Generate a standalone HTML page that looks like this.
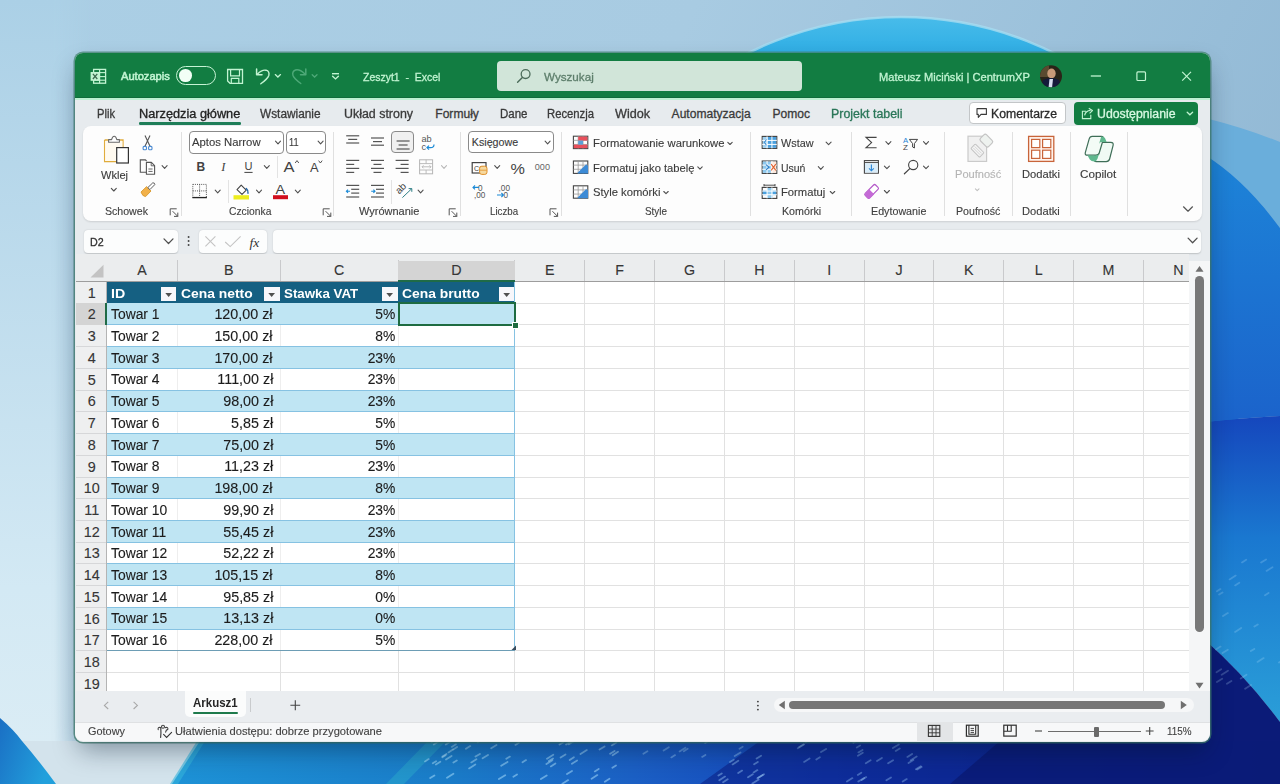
<!DOCTYPE html>
<html><head><meta charset="utf-8"><style>
html,body{margin:0;padding:0;width:1280px;height:784px;overflow:hidden;}
body{position:relative;font-family:"Liberation Sans", sans-serif;}
.t{position:absolute;white-space:pre;line-height:normal;-webkit-text-stroke:0.3px currentColor;}
.a{position:absolute;}
svg{position:absolute;overflow:visible;}
</style></head><body>

<svg width="1280" height="784" style="left:0;top:0">
<defs>
<linearGradient id="bgsky" x1="0" y1="0" x2="1" y2="0.3">
<stop offset="0" stop-color="#abcfe5"/><stop offset="0.5" stop-color="#a8cbe2"/><stop offset="1" stop-color="#92b9d5"/></linearGradient>
<linearGradient id="bgleft" x1="0" y1="0" x2="0" y2="1">
<stop offset="0" stop-color="#abd0e6"/><stop offset="0.75" stop-color="#d3e9f4"/><stop offset="1" stop-color="#dcedf5"/></linearGradient>
<linearGradient id="petaltop" x1="0" y1="0" x2="0" y2="1">
<stop offset="0" stop-color="#48bcea"/><stop offset="0.06" stop-color="#2cacE4"/><stop offset="0.12" stop-color="#1f9edd"/><stop offset="1" stop-color="#1d80d3"/></linearGradient>
<linearGradient id="rmid" x1="0" y1="0" x2="0" y2="1">
<stop offset="0" stop-color="#1d84d8"/><stop offset="1" stop-color="#1b63cb"/></linearGradient>
<linearGradient id="rcyan" x1="0" y1="0" x2="0" y2="1">
<stop offset="0" stop-color="#1547bd"/><stop offset="0.4" stop-color="#1a78d0"/><stop offset="1" stop-color="#2a9ed8"/></linearGradient>
<linearGradient id="bbottom" x1="0" y1="0" x2="1" y2="0">
<stop offset="0" stop-color="#1d92d6"/><stop offset="0.25" stop-color="#1a7cc8"/><stop offset="0.42" stop-color="#1b5fc4"/><stop offset="0.6" stop-color="#1240b8"/><stop offset="0.8" stop-color="#0e2c9c"/><stop offset="1" stop-color="#0b1f86"/></linearGradient>
<linearGradient id="gmask" x1="0" y1="0" x2="1" y2="0"><stop offset="0.6" stop-color="#fff"/><stop offset="1" stop-color="#000"/></linearGradient>
<mask id="mleft"><rect x="0" y="0" width="90" height="784" fill="url(#gmask)"/></mask>
</defs>
<rect x="0" y="0" width="1280" height="784" fill="url(#bgsky)"/>
<rect x="0" y="0" width="90" height="784" fill="url(#bgleft)" mask="url(#mleft)"/>
<circle cx="901" cy="360" r="343" fill="url(#petaltop)" stroke="#a8dcf0" stroke-width="2.5" stroke-opacity="0.8"/>
<path d="M1205 118 Q1245 128 1280 142 L1280 228 Q1245 180 1205 155 Z" fill="#6aaedb"/>
<path d="M1205 155 Q1245 180 1280 228 L1280 416 Q1245 418 1205 422 Z" fill="url(#rmid)"/>
<path d="M1205 422 Q1245 418 1280 416 L1280 722 Q1245 675 1205 640 Z" fill="url(#rcyan)"/>
<path d="M1205 640 Q1245 675 1280 722 L1280 784 L1205 784 Z" fill="#0b1b78"/>
<path d="M195 741 L1280 741 L1280 784 L170 784 Z" fill="url(#bbottom)"/>
<path d="M760 741 L1280 741 L1280 784 L700 784 Z" fill="#0b1d82" opacity="0.55"/>
<path d="M1000 741 L1280 741 L1280 784 L950 784 Z" fill="#0a1a74" opacity="0.8"/>
<path d="M0 741 L200 741 L172 784 L0 784 Z" fill="#d3e3ec"/>
<linearGradient id="blt" x1="0" y1="0" x2="1" y2="0.4"><stop offset="0" stop-color="#1a6fc4"/><stop offset="1" stop-color="#22a0dc"/></linearGradient>
<path d="M0 718 Q14 730 22 741 Q40 762 56 784 L0 784 Z" fill="url(#blt)"/>
<path d="M197 741 L205 741 L178 784 L170 784 Z" fill="#35b4dc" opacity="0.6"/>
<path d="M428 741 L446 741 L404 784 L386 784 Z" fill="#2aa6cc" opacity="0.55"/>
<line x1='491.2' y1='748.3' x2='496.5' y2='745.0' stroke='#b0e4ff' stroke-width='1.8' stroke-linecap='round' opacity='0.50'/><line x1='435.9' y1='764.5' x2='440.3' y2='761.8' stroke='#b0e4ff' stroke-width='1.8' stroke-linecap='round' opacity='0.50'/><line x1='432.8' y1='763.3' x2='436.1' y2='761.2' stroke='#b0e4ff' stroke-width='1.8' stroke-linecap='round' opacity='0.50'/><line x1='515.4' y1='744.9' x2='518.9' y2='742.8' stroke='#b0e4ff' stroke-width='1.8' stroke-linecap='round' opacity='0.50'/><line x1='513.4' y1='776.7' x2='517.0' y2='774.5' stroke='#b0e4ff' stroke-width='1.8' stroke-linecap='round' opacity='0.50'/><line x1='469.1' y1='768.4' x2='475.3' y2='764.5' stroke='#b0e4ff' stroke-width='1.8' stroke-linecap='round' opacity='0.50'/><line x1='547.0' y1='758.7' x2='553.3' y2='754.7' stroke='#b0e4ff' stroke-width='1.8' stroke-linecap='round' opacity='0.50'/><line x1='430.2' y1='778.1' x2='434.4' y2='775.5' stroke='#b0e4ff' stroke-width='1.8' stroke-linecap='round' opacity='0.50'/><line x1='451.7' y1='746.9' x2='455.9' y2='744.3' stroke='#b0e4ff' stroke-width='1.8' stroke-linecap='round' opacity='0.50'/><line x1='599.5' y1='749.6' x2='604.6' y2='746.4' stroke='#b0e4ff' stroke-width='1.8' stroke-linecap='round' opacity='0.50'/><line x1='560.6' y1='757.6' x2='565.5' y2='754.5' stroke='#b0e4ff' stroke-width='1.8' stroke-linecap='round' opacity='0.50'/><line x1='433.8' y1='744.5' x2='437.7' y2='742.1' stroke='#b0e4ff' stroke-width='1.8' stroke-linecap='round' opacity='0.50'/><line x1='569.7' y1='760.0' x2='573.9' y2='757.3' stroke='#b0e4ff' stroke-width='1.8' stroke-linecap='round' opacity='0.50'/><line x1='548.8' y1='761.0' x2='553.0' y2='758.4' stroke='#b0e4ff' stroke-width='1.8' stroke-linecap='round' opacity='0.50'/><line x1='594.8' y1='771.4' x2='598.7' y2='768.9' stroke='#b0e4ff' stroke-width='1.8' stroke-linecap='round' opacity='0.50'/><line x1='546.4' y1='764.1' x2='552.4' y2='760.3' stroke='#b0e4ff' stroke-width='1.8' stroke-linecap='round' opacity='0.50'/><line x1='580.5' y1='754.1' x2='586.8' y2='750.1' stroke='#b0e4ff' stroke-width='1.8' stroke-linecap='round' opacity='0.50'/><line x1='446.0' y1='759.6' x2='451.6' y2='756.0' stroke='#b0e4ff' stroke-width='1.8' stroke-linecap='round' opacity='0.50'/><line x1='453.4' y1='762.5' x2='456.8' y2='760.5' stroke='#b0e4ff' stroke-width='1.8' stroke-linecap='round' opacity='0.50'/><line x1='567.0' y1='774.1' x2='572.0' y2='771.0' stroke='#b0e4ff' stroke-width='1.8' stroke-linecap='round' opacity='0.50'/><line x1='612.6' y1='755.2' x2='618.0' y2='751.8' stroke='#b0e4ff' stroke-width='1.8' stroke-linecap='round' opacity='0.50'/><line x1='550.8' y1='766.4' x2='555.4' y2='763.4' stroke='#b0e4ff' stroke-width='1.8' stroke-linecap='round' opacity='0.50'/><line x1='604.8' y1='781.7' x2='609.5' y2='778.7' stroke='#b0e4ff' stroke-width='1.8' stroke-linecap='round' opacity='0.50'/><line x1='566.1' y1='744.5' x2='571.6' y2='741.1' stroke='#b0e4ff' stroke-width='1.8' stroke-linecap='round' opacity='0.50'/><line x1='562.4' y1='783.7' x2='568.2' y2='780.1' stroke='#b0e4ff' stroke-width='1.8' stroke-linecap='round' opacity='0.50'/><line x1='482.6' y1='758.2' x2='488.0' y2='754.9' stroke='#b0e4ff' stroke-width='1.8' stroke-linecap='round' opacity='0.50'/><line x1='425.0' y1='761.4' x2='428.7' y2='759.1' stroke='#b0e4ff' stroke-width='1.8' stroke-linecap='round' opacity='0.50'/><line x1='445.8' y1='744.5' x2='451.4' y2='740.9' stroke='#b0e4ff' stroke-width='1.8' stroke-linecap='round' opacity='0.50'/><line x1='448.5' y1='752.4' x2='452.9' y2='749.6' stroke='#b0e4ff' stroke-width='1.8' stroke-linecap='round' opacity='0.50'/><line x1='611.7' y1='745.4' x2='616.4' y2='742.5' stroke='#b0e4ff' stroke-width='1.8' stroke-linecap='round' opacity='0.50'/><line x1='540.9' y1='779.1' x2='546.7' y2='775.5' stroke='#b0e4ff' stroke-width='1.8' stroke-linecap='round' opacity='0.50'/><line x1='610.1' y1='753.7' x2='614.6' y2='750.9' stroke='#b0e4ff' stroke-width='1.8' stroke-linecap='round' opacity='0.50'/><line x1='498.9' y1='779.1' x2='505.2' y2='775.2' stroke='#b0e4ff' stroke-width='1.8' stroke-linecap='round' opacity='0.50'/><line x1='453.2' y1='749.4' x2='457.1' y2='746.9' stroke='#b0e4ff' stroke-width='1.8' stroke-linecap='round' opacity='0.50'/><line x1='471.3' y1='762.4' x2='476.4' y2='759.2' stroke='#b0e4ff' stroke-width='1.8' stroke-linecap='round' opacity='0.50'/><line x1='477.8' y1='742.2' x2='482.3' y2='739.3' stroke='#b0e4ff' stroke-width='1.8' stroke-linecap='round' opacity='0.50'/><line x1='501.2' y1='765.8' x2='507.5' y2='761.9' stroke='#b0e4ff' stroke-width='1.8' stroke-linecap='round' opacity='0.50'/><line x1='571.9' y1='763.7' x2='577.1' y2='760.4' stroke='#b0e4ff' stroke-width='1.8' stroke-linecap='round' opacity='0.50'/><line x1='568.8' y1='744.3' x2='574.8' y2='740.5' stroke='#b0e4ff' stroke-width='1.8' stroke-linecap='round' opacity='0.50'/><line x1='591.6' y1='778.7' x2='597.3' y2='775.1' stroke='#b0e4ff' stroke-width='1.8' stroke-linecap='round' opacity='0.50'/><line x1='506.3' y1='758.8' x2='509.9' y2='756.6' stroke='#b0e4ff' stroke-width='1.8' stroke-linecap='round' opacity='0.50'/><line x1='559.5' y1='744.6' x2='563.0' y2='742.5' stroke='#b0e4ff' stroke-width='1.8' stroke-linecap='round' opacity='0.50'/><line x1='465.9' y1='748.8' x2='470.2' y2='746.1' stroke='#b0e4ff' stroke-width='1.8' stroke-linecap='round' opacity='0.50'/><line x1='431.6' y1='742.0' x2='435.3' y2='739.7' stroke='#b0e4ff' stroke-width='1.8' stroke-linecap='round' opacity='0.50'/><line x1='442.3' y1='757.3' x2='445.6' y2='755.2' stroke='#b0e4ff' stroke-width='1.8' stroke-linecap='round' opacity='0.50'/><line x1='612.4' y1='767.8' x2='616.0' y2='765.5' stroke='#b0e4ff' stroke-width='1.8' stroke-linecap='round' opacity='0.50'/><line x1='475.5' y1='756.6' x2='479.9' y2='753.9' stroke='#b0e4ff' stroke-width='1.8' stroke-linecap='round' opacity='0.50'/><line x1='447.0' y1='777.7' x2='453.4' y2='773.7' stroke='#b0e4ff' stroke-width='1.8' stroke-linecap='round' opacity='0.50'/><line x1='522.5' y1='762.3' x2='526.0' y2='760.1' stroke='#b0e4ff' stroke-width='1.8' stroke-linecap='round' opacity='0.50'/><line x1='442.5' y1='756.4' x2='446.5' y2='753.9' stroke='#b0e4ff' stroke-width='1.8' stroke-linecap='round' opacity='0.50'/><line x1='739.5' y1='748.8' x2='742.7' y2='746.7' stroke='#a8d8ff' stroke-width='1.8' stroke-linecap='round' opacity='0.40'/><line x1='754.1' y1='764.2' x2='757.8' y2='761.9' stroke='#a8d8ff' stroke-width='1.8' stroke-linecap='round' opacity='0.40'/><line x1='705.2' y1='743.1' x2='710.1' y2='740.1' stroke='#a8d8ff' stroke-width='1.8' stroke-linecap='round' opacity='0.40'/><line x1='757.4' y1='778.3' x2='762.8' y2='774.9' stroke='#a8d8ff' stroke-width='1.8' stroke-linecap='round' opacity='0.40'/><line x1='671.3' y1='757.4' x2='675.1' y2='755.1' stroke='#a8d8ff' stroke-width='1.8' stroke-linecap='round' opacity='0.40'/><line x1='732.6' y1='764.4' x2='738.3' y2='760.8' stroke='#a8d8ff' stroke-width='1.8' stroke-linecap='round' opacity='0.40'/><line x1='679.6' y1='751.4' x2='685.4' y2='747.7' stroke='#a8d8ff' stroke-width='1.8' stroke-linecap='round' opacity='0.40'/><line x1='758.2' y1='777.8' x2='764.0' y2='774.2' stroke='#a8d8ff' stroke-width='1.8' stroke-linecap='round' opacity='0.40'/><line x1='738.2' y1='773.1' x2='742.1' y2='770.6' stroke='#a8d8ff' stroke-width='1.8' stroke-linecap='round' opacity='0.40'/><line x1='702.1' y1='756.9' x2='705.4' y2='754.9' stroke='#a8d8ff' stroke-width='1.8' stroke-linecap='round' opacity='0.40'/><line x1='643.4' y1='753.7' x2='647.4' y2='751.2' stroke='#a8d8ff' stroke-width='1.8' stroke-linecap='round' opacity='0.40'/><line x1='723.1' y1='782.2' x2='727.7' y2='779.3' stroke='#a8d8ff' stroke-width='1.8' stroke-linecap='round' opacity='0.40'/><line x1='752.4' y1='783.5' x2='758.7' y2='779.6' stroke='#a8d8ff' stroke-width='1.8' stroke-linecap='round' opacity='0.40'/><line x1='683.8' y1='751.3' x2='687.7' y2='748.8' stroke='#a8d8ff' stroke-width='1.8' stroke-linecap='round' opacity='0.40'/><line x1='663.6' y1='750.6' x2='668.8' y2='747.3' stroke='#a8d8ff' stroke-width='1.8' stroke-linecap='round' opacity='0.40'/><line x1='748.0' y1='777.3' x2='752.8' y2='774.3' stroke='#a8d8ff' stroke-width='1.8' stroke-linecap='round' opacity='0.40'/><line x1='718.4' y1='775.6' x2='721.8' y2='773.4' stroke='#a8d8ff' stroke-width='1.8' stroke-linecap='round' opacity='0.40'/><line x1='719.3' y1='780.2' x2='725.0' y2='776.6' stroke='#a8d8ff' stroke-width='1.8' stroke-linecap='round' opacity='0.40'/><line x1='730.0' y1='762.1' x2='733.8' y2='759.7' stroke='#a8d8ff' stroke-width='1.8' stroke-linecap='round' opacity='0.40'/><line x1='734.7' y1='756.0' x2='740.5' y2='752.4' stroke='#a8d8ff' stroke-width='1.8' stroke-linecap='round' opacity='0.40'/><line x1='756.6' y1='758.6' x2='761.1' y2='755.8' stroke='#a8d8ff' stroke-width='1.8' stroke-linecap='round' opacity='0.40'/><line x1='753.6' y1='772.4' x2='757.4' y2='770.1' stroke='#a8d8ff' stroke-width='1.8' stroke-linecap='round' opacity='0.40'/><line x1='797.8' y1='748.3' x2='803.9' y2='744.5' stroke='#a8d8ff' stroke-width='1.8' stroke-linecap='round' opacity='0.35'/><line x1='892.9' y1='748.1' x2='898.8' y2='744.5' stroke='#a8d8ff' stroke-width='1.8' stroke-linecap='round' opacity='0.35'/><line x1='917.2' y1='769.6' x2='921.6' y2='766.9' stroke='#a8d8ff' stroke-width='1.8' stroke-linecap='round' opacity='0.35'/><line x1='856.8' y1='747.5' x2='860.1' y2='745.5' stroke='#a8d8ff' stroke-width='1.8' stroke-linecap='round' opacity='0.35'/><line x1='915.9' y1='769.3' x2='920.8' y2='766.2' stroke='#a8d8ff' stroke-width='1.8' stroke-linecap='round' opacity='0.35'/><line x1='910.7' y1='760.2' x2='916.7' y2='756.5' stroke='#a8d8ff' stroke-width='1.8' stroke-linecap='round' opacity='0.35'/><line x1='895.7' y1='750.9' x2='899.7' y2='748.4' stroke='#a8d8ff' stroke-width='1.8' stroke-linecap='round' opacity='0.35'/><line x1='821.0' y1='752.1' x2='826.1' y2='748.9' stroke='#a8d8ff' stroke-width='1.8' stroke-linecap='round' opacity='0.35'/><line x1='816.3' y1='759.6' x2='819.9' y2='757.3' stroke='#a8d8ff' stroke-width='1.8' stroke-linecap='round' opacity='0.35'/><line x1='907.4' y1='756.9' x2='912.1' y2='753.9' stroke='#a8d8ff' stroke-width='1.8' stroke-linecap='round' opacity='0.35'/><line x1='861.7' y1='780.0' x2='866.2' y2='777.1' stroke='#a8d8ff' stroke-width='1.8' stroke-linecap='round' opacity='0.35'/><line x1='908.5' y1='763.1' x2='913.4' y2='760.0' stroke='#a8d8ff' stroke-width='1.8' stroke-linecap='round' opacity='0.35'/><line x1='853.3' y1='742.8' x2='857.9' y2='739.9' stroke='#a8d8ff' stroke-width='1.8' stroke-linecap='round' opacity='0.35'/><line x1='805.6' y1='742.2' x2='811.4' y2='738.6' stroke='#a8d8ff' stroke-width='1.8' stroke-linecap='round' opacity='0.35'/><line x1='804.1' y1='761.9' x2='809.6' y2='758.4' stroke='#a8d8ff' stroke-width='1.8' stroke-linecap='round' opacity='0.35'/><line x1='857.9' y1='755.7' x2='862.8' y2='752.7' stroke='#a8d8ff' stroke-width='1.8' stroke-linecap='round' opacity='0.35'/><line x1='857.8' y1='774.9' x2='861.3' y2='772.7' stroke='#a8d8ff' stroke-width='1.8' stroke-linecap='round' opacity='0.35'/><line x1='858.4' y1='752.4' x2='862.5' y2='749.9' stroke='#a8d8ff' stroke-width='1.8' stroke-linecap='round' opacity='0.35'/><line x1='888.1' y1='763.3' x2='893.1' y2='760.2' stroke='#a8d8ff' stroke-width='1.8' stroke-linecap='round' opacity='0.35'/><line x1='886.4' y1='780.3' x2='891.0' y2='777.4' stroke='#a8d8ff' stroke-width='1.8' stroke-linecap='round' opacity='0.35'/><line x1='865.8' y1='763.2' x2='870.6' y2='760.2' stroke='#a8d8ff' stroke-width='1.8' stroke-linecap='round' opacity='0.35'/><line x1='877.0' y1='761.0' x2='881.9' y2='757.9' stroke='#a8d8ff' stroke-width='1.8' stroke-linecap='round' opacity='0.35'/><line x1='846.9' y1='781.5' x2='852.4' y2='778.1' stroke='#a8d8ff' stroke-width='1.8' stroke-linecap='round' opacity='0.35'/><line x1='902.7' y1='781.6' x2='906.7' y2='779.1' stroke='#a8d8ff' stroke-width='1.8' stroke-linecap='round' opacity='0.35'/><line x1='858.3' y1='781.6' x2='864.2' y2='777.9' stroke='#a8d8ff' stroke-width='1.8' stroke-linecap='round' opacity='0.35'/><line x1='799.2' y1='747.1' x2='803.8' y2='744.2' stroke='#a8d8ff' stroke-width='1.8' stroke-linecap='round' opacity='0.35'/><line x1='1216.9' y1='591.3' x2='1220.4' y2='589.1' stroke='#bfe6ff' stroke-width='1.8' stroke-linecap='round' opacity='0.22'/><line x1='1257.5' y1='661.9' x2='1263.6' y2='658.1' stroke='#bfe6ff' stroke-width='1.8' stroke-linecap='round' opacity='0.22'/><line x1='1222.5' y1='653.1' x2='1227.8' y2='649.8' stroke='#bfe6ff' stroke-width='1.8' stroke-linecap='round' opacity='0.22'/><line x1='1221.7' y1='674.8' x2='1228.0' y2='670.8' stroke='#bfe6ff' stroke-width='1.8' stroke-linecap='round' opacity='0.22'/><line x1='1226.9' y1='683.8' x2='1231.4' y2='681.0' stroke='#bfe6ff' stroke-width='1.8' stroke-linecap='round' opacity='0.22'/><line x1='1245.1' y1='688.7' x2='1251.0' y2='685.0' stroke='#bfe6ff' stroke-width='1.8' stroke-linecap='round' opacity='0.22'/><line x1='1223.0' y1='616.1' x2='1227.8' y2='613.1' stroke='#bfe6ff' stroke-width='1.8' stroke-linecap='round' opacity='0.22'/><line x1='1235.1' y1='585.4' x2='1239.3' y2='582.8' stroke='#bfe6ff' stroke-width='1.8' stroke-linecap='round' opacity='0.22'/><line x1='1261.1' y1='562.5' x2='1266.1' y2='559.4' stroke='#bfe6ff' stroke-width='1.8' stroke-linecap='round' opacity='0.22'/><line x1='1242.0' y1='562.4' x2='1246.2' y2='559.7' stroke='#bfe6ff' stroke-width='1.8' stroke-linecap='round' opacity='0.22'/><line x1='1254.4' y1='626.6' x2='1257.8' y2='624.5' stroke='#bfe6ff' stroke-width='1.8' stroke-linecap='round' opacity='0.22'/><line x1='1279.0' y1='662.5' x2='1285.3' y2='658.5' stroke='#bfe6ff' stroke-width='1.8' stroke-linecap='round' opacity='0.22'/><line x1='1219.1' y1='594.5' x2='1222.5' y2='592.4' stroke='#bfe6ff' stroke-width='1.8' stroke-linecap='round' opacity='0.22'/><line x1='1265.0' y1='595.2' x2='1268.6' y2='592.9' stroke='#bfe6ff' stroke-width='1.8' stroke-linecap='round' opacity='0.22'/><line x1='1240.7' y1='678.5' x2='1246.5' y2='674.8' stroke='#bfe6ff' stroke-width='1.8' stroke-linecap='round' opacity='0.22'/><line x1='1229.6' y1='579.4' x2='1235.7' y2='575.6' stroke='#bfe6ff' stroke-width='1.8' stroke-linecap='round' opacity='0.22'/><line x1='1250.8' y1='651.1' x2='1254.3' y2='648.9' stroke='#bfe6ff' stroke-width='1.8' stroke-linecap='round' opacity='0.22'/><line x1='1215.9' y1='649.5' x2='1220.5' y2='646.6' stroke='#bfe6ff' stroke-width='1.8' stroke-linecap='round' opacity='0.22'/><line x1='1216.9' y1='682.0' x2='1222.2' y2='678.7' stroke='#bfe6ff' stroke-width='1.8' stroke-linecap='round' opacity='0.22'/><line x1='1266.5' y1='570.9' x2='1272.5' y2='567.2' stroke='#bfe6ff' stroke-width='1.8' stroke-linecap='round' opacity='0.22'/><line x1='1216.5' y1='672.2' x2='1221.2' y2='669.3' stroke='#bfe6ff' stroke-width='1.8' stroke-linecap='round' opacity='0.22'/><line x1='1235.1' y1='631.9' x2='1241.2' y2='628.0' stroke='#bfe6ff' stroke-width='1.8' stroke-linecap='round' opacity='0.22'/>
</svg>
<div class=a style='left:75px;top:53px;width:1134.5px;height:688.5px;background:#e7ebee;border-radius:8px;box-shadow:0 12px 26px -4px rgba(0,20,40,.4),0 0 0 1.5px rgba(70,135,115,.75)'></div>
<div class=a style='left:75px;top:53px;width:1134.5px;height:45.4px;background:#127d42;border-radius:8px 8px 0 0'></div>
<div class=a style='left:75px;top:96.6px;width:1134.5px;height:1.8px;background:#0f6c3a'></div>
<div class=a style='left:75px;top:98.4px;width:1134.5px;height:1.6px;background:#bdf0d2'></div>
<div class=a style='left:139.4px;top:122.4px;width:101.3px;height:2.4px;background:#1f7e58;border-radius:1.2px'></div>
<div class=a style='left:496.5px;top:61px;width:305.5px;height:30.25px;background:#d1e5d9;border-radius:4px'></div>
<div class=a style='left:176px;top:66px;width:40px;height:19px;box-sizing:border-box;border:1.6px solid #c6f3d4;border-radius:10px'></div>
<div class=a style='left:179px;top:69.3px;width:12.6px;height:12.6px;background:#f2fff6;border-radius:50%'></div>
<div class=a style='left:969px;top:102.4px;width:97px;height:21.85px;box-sizing:border-box;background:#fff;border:1px solid #c3c6c8;border-radius:4px'></div>
<div class=a style='left:1074.4px;top:102px;width:123.35px;height:22.5px;background:#127d42;border-radius:4px'></div>
<div class=a style='left:83px;top:126.3px;width:1118.6px;height:95px;background:#fdfdfd;border-radius:8px;box-shadow:0 1px 2px rgba(0,0,0,.12)'></div>
<div class=a style='left:181px;top:132.4px;width:1px;height:84px;background:#e0e0e0'></div>
<div class=a style='left:333px;top:132.4px;width:1px;height:84px;background:#e0e0e0'></div>
<div class=a style='left:460.3px;top:132.4px;width:1px;height:84px;background:#e0e0e0'></div>
<div class=a style='left:561px;top:132.4px;width:1px;height:84px;background:#e0e0e0'></div>
<div class=a style='left:750px;top:132.4px;width:1px;height:84px;background:#e0e0e0'></div>
<div class=a style='left:851.25px;top:132.4px;width:1px;height:84px;background:#e0e0e0'></div>
<div class=a style='left:944.4px;top:132.4px;width:1px;height:84px;background:#e0e0e0'></div>
<div class=a style='left:1011.6px;top:132.4px;width:1px;height:84px;background:#e0e0e0'></div>
<div class=a style='left:1069.7px;top:132.4px;width:1px;height:84px;background:#e0e0e0'></div>
<div class=a style='left:1126.7px;top:132.4px;width:1px;height:84px;background:#e0e0e0'></div>
<div class=a style='left:189px;top:131px;width:94.75px;height:22.6px;box-sizing:border-box;border:1px solid #8a8a8a;border-radius:4px;background:#fff'></div>
<div class=a style='left:286px;top:131px;width:40px;height:22.6px;box-sizing:border-box;border:1px solid #8a8a8a;border-radius:4px;background:#fff'></div>
<div class=a style='left:468.4px;top:131.4px;width:85.6px;height:22px;box-sizing:border-box;border:1px solid #8a8a8a;border-radius:4px;background:#fff'></div>
<div class=a style='left:391px;top:131.4px;width:22.5px;height:22px;box-sizing:border-box;border:1px solid #8a8a8a;border-radius:4px;background:#f0f0f0'></div>
<div class=a style='left:277px;top:156px;width:1px;height:22px;background:#e3e3e3'></div>
<div class=a style='left:228px;top:180px;width:1px;height:23px;background:#e3e3e3'></div>
<div class=a style='left:391.4px;top:180px;width:1px;height:24px;background:#e3e3e3'></div>
<div class=a style='left:84.3px;top:230px;width:93.7px;height:23px;background:#fcfdfd;border-radius:4px;box-shadow:0 0.5px 1.5px rgba(0,0,0,.18)'></div>
<div class=a style='left:198.6px;top:230px;width:68.4px;height:23px;background:#fcfdfd;border-radius:4px;box-shadow:0 0.5px 1.5px rgba(0,0,0,.18)'></div>
<div class=a style='left:272.8px;top:230px;width:928.4px;height:23px;background:#fcfdfd;border-radius:4px;box-shadow:0 0.5px 1.5px rgba(0,0,0,.18)'></div>
<div class=a style='left:76px;top:253.5px;width:1113px;height:28px;background:#ebedee'></div>
<div class=a style='left:76px;top:281.5px;width:31px;height:409.5px;background:#eeeff0'></div>
<div class=a style='left:107px;top:281.5px;width:1082px;height:409.5px;background:#ffffff'></div>
<div class=a style='left:176.5px;top:650.5px;width:1px;height:40.5px;background:#e1e1e1'></div>
<div class=a style='left:176.5px;top:303.2px;width:1px;height:347.3px;background:#eeeeee'></div>
<div class=a style='left:176.5px;top:259.5px;width:1px;height:22px;background:#c9cacc'></div>
<div class=a style='left:279.8px;top:650.5px;width:1px;height:40.5px;background:#e1e1e1'></div>
<div class=a style='left:279.8px;top:303.2px;width:1px;height:347.3px;background:#eeeeee'></div>
<div class=a style='left:279.8px;top:259.5px;width:1px;height:22px;background:#c9cacc'></div>
<div class=a style='left:397.5px;top:650.5px;width:1px;height:40.5px;background:#e1e1e1'></div>
<div class=a style='left:397.5px;top:303.2px;width:1px;height:347.3px;background:#eeeeee'></div>
<div class=a style='left:397.5px;top:259.5px;width:1px;height:22px;background:#c9cacc'></div>
<div class=a style='left:514.3px;top:281.5px;width:1px;height:409.5px;background:#e1e1e1'></div>
<div class=a style='left:514.3px;top:259.5px;width:1px;height:22px;background:#c9cacc'></div>
<div class=a style='left:584.15px;top:281.5px;width:1px;height:409.5px;background:#e1e1e1'></div>
<div class=a style='left:584.15px;top:259.5px;width:1px;height:22px;background:#c9cacc'></div>
<div class=a style='left:654.0px;top:281.5px;width:1px;height:409.5px;background:#e1e1e1'></div>
<div class=a style='left:654.0px;top:259.5px;width:1px;height:22px;background:#c9cacc'></div>
<div class=a style='left:723.8499999999999px;top:281.5px;width:1px;height:409.5px;background:#e1e1e1'></div>
<div class=a style='left:723.8499999999999px;top:259.5px;width:1px;height:22px;background:#c9cacc'></div>
<div class=a style='left:793.6999999999999px;top:281.5px;width:1px;height:409.5px;background:#e1e1e1'></div>
<div class=a style='left:793.6999999999999px;top:259.5px;width:1px;height:22px;background:#c9cacc'></div>
<div class=a style='left:863.55px;top:281.5px;width:1px;height:409.5px;background:#e1e1e1'></div>
<div class=a style='left:863.55px;top:259.5px;width:1px;height:22px;background:#c9cacc'></div>
<div class=a style='left:933.3999999999999px;top:281.5px;width:1px;height:409.5px;background:#e1e1e1'></div>
<div class=a style='left:933.3999999999999px;top:259.5px;width:1px;height:22px;background:#c9cacc'></div>
<div class=a style='left:1003.2499999999999px;top:281.5px;width:1px;height:409.5px;background:#e1e1e1'></div>
<div class=a style='left:1003.2499999999999px;top:259.5px;width:1px;height:22px;background:#c9cacc'></div>
<div class=a style='left:1073.1px;top:281.5px;width:1px;height:409.5px;background:#e1e1e1'></div>
<div class=a style='left:1073.1px;top:259.5px;width:1px;height:22px;background:#c9cacc'></div>
<div class=a style='left:1142.9499999999998px;top:281.5px;width:1px;height:409.5px;background:#e1e1e1'></div>
<div class=a style='left:1142.9499999999998px;top:259.5px;width:1px;height:22px;background:#c9cacc'></div>
<div class=a style='left:107px;top:302.73px;width:1082px;height:1px;background:#e1e1e1'></div>
<div class=a style='left:76px;top:302.73px;width:31px;height:1px;background:#d6d7d9'></div>
<div class=a style='left:107px;top:324.46px;width:1082px;height:1px;background:#e1e1e1'></div>
<div class=a style='left:76px;top:324.46px;width:31px;height:1px;background:#d6d7d9'></div>
<div class=a style='left:107px;top:346.19px;width:1082px;height:1px;background:#e1e1e1'></div>
<div class=a style='left:76px;top:346.19px;width:31px;height:1px;background:#d6d7d9'></div>
<div class=a style='left:107px;top:367.92px;width:1082px;height:1px;background:#e1e1e1'></div>
<div class=a style='left:76px;top:367.92px;width:31px;height:1px;background:#d6d7d9'></div>
<div class=a style='left:107px;top:389.65px;width:1082px;height:1px;background:#e1e1e1'></div>
<div class=a style='left:76px;top:389.65px;width:31px;height:1px;background:#d6d7d9'></div>
<div class=a style='left:107px;top:411.38px;width:1082px;height:1px;background:#e1e1e1'></div>
<div class=a style='left:76px;top:411.38px;width:31px;height:1px;background:#d6d7d9'></div>
<div class=a style='left:107px;top:433.11px;width:1082px;height:1px;background:#e1e1e1'></div>
<div class=a style='left:76px;top:433.11px;width:31px;height:1px;background:#d6d7d9'></div>
<div class=a style='left:107px;top:454.84000000000003px;width:1082px;height:1px;background:#e1e1e1'></div>
<div class=a style='left:76px;top:454.84000000000003px;width:31px;height:1px;background:#d6d7d9'></div>
<div class=a style='left:107px;top:476.57px;width:1082px;height:1px;background:#e1e1e1'></div>
<div class=a style='left:76px;top:476.57px;width:31px;height:1px;background:#d6d7d9'></div>
<div class=a style='left:107px;top:498.3px;width:1082px;height:1px;background:#e1e1e1'></div>
<div class=a style='left:76px;top:498.3px;width:31px;height:1px;background:#d6d7d9'></div>
<div class=a style='left:107px;top:520.03px;width:1082px;height:1px;background:#e1e1e1'></div>
<div class=a style='left:76px;top:520.03px;width:31px;height:1px;background:#d6d7d9'></div>
<div class=a style='left:107px;top:541.76px;width:1082px;height:1px;background:#e1e1e1'></div>
<div class=a style='left:76px;top:541.76px;width:31px;height:1px;background:#d6d7d9'></div>
<div class=a style='left:107px;top:563.49px;width:1082px;height:1px;background:#e1e1e1'></div>
<div class=a style='left:76px;top:563.49px;width:31px;height:1px;background:#d6d7d9'></div>
<div class=a style='left:107px;top:585.22px;width:1082px;height:1px;background:#e1e1e1'></div>
<div class=a style='left:76px;top:585.22px;width:31px;height:1px;background:#d6d7d9'></div>
<div class=a style='left:107px;top:606.95px;width:1082px;height:1px;background:#e1e1e1'></div>
<div class=a style='left:76px;top:606.95px;width:31px;height:1px;background:#d6d7d9'></div>
<div class=a style='left:107px;top:628.6800000000001px;width:1082px;height:1px;background:#e1e1e1'></div>
<div class=a style='left:76px;top:628.6800000000001px;width:31px;height:1px;background:#d6d7d9'></div>
<div class=a style='left:107px;top:650.4100000000001px;width:1082px;height:1px;background:#e1e1e1'></div>
<div class=a style='left:76px;top:650.4100000000001px;width:31px;height:1px;background:#d6d7d9'></div>
<div class=a style='left:107px;top:672.14px;width:1082px;height:1px;background:#e1e1e1'></div>
<div class=a style='left:76px;top:672.14px;width:31px;height:1px;background:#d6d7d9'></div>
<div class=a style='left:107px;top:693.87px;width:1082px;height:1px;background:#e1e1e1'></div>
<div class=a style='left:76px;top:693.87px;width:31px;height:1px;background:#d6d7d9'></div>
<svg width='16' height='16' style='left:89px;top:263px'><path d='M1.5 14.6 L14.5 14.6 L14.5 1.8 Z' fill='#c3c3c3'/></svg>
<div class=a style='left:398px;top:261px;width:116.8px;height:20.5px;background:#d4d4d4'></div>
<div class=a style='left:398px;top:280px;width:116.8px;height:2px;background:#1f6b47'></div>
<div class=a style='left:76px;top:303.23px;width:31px;height:21.73px;background:#d4d4d4'></div>
<div class=a style='left:76px;top:281px;width:322px;height:1px;background:#9d9d9d'></div>
<div class=a style='left:514.8px;top:281px;width:674.2px;height:1px;background:#9d9d9d'></div>
<div class=a style='left:106.3px;top:281.5px;width:1px;height:409.5px;background:#b4b4b4'></div>
<div class=a style='left:105.2px;top:303.23px;width:2px;height:21.73px;background:#1f6b47'></div>
<div class=a style='left:107px;top:281.5px;width:407.8px;height:21.93px;background:#156082'></div>
<div class=a style='left:107px;top:303.23px;width:407.8px;height:21.73px;background:#bfe5f3'></div>
<div class=a style='left:107px;top:346.69px;width:407.8px;height:21.73px;background:#bfe5f3'></div>
<div class=a style='left:107px;top:390.15px;width:407.8px;height:21.73px;background:#bfe5f3'></div>
<div class=a style='left:107px;top:433.61px;width:407.8px;height:21.73px;background:#bfe5f3'></div>
<div class=a style='left:107px;top:477.07px;width:407.8px;height:21.73px;background:#bfe5f3'></div>
<div class=a style='left:107px;top:520.53px;width:407.8px;height:21.73px;background:#bfe5f3'></div>
<div class=a style='left:107px;top:563.99px;width:407.8px;height:21.73px;background:#bfe5f3'></div>
<div class=a style='left:107px;top:607.45px;width:407.8px;height:21.73px;background:#bfe5f3'></div>
<div class=a style='left:107px;top:324.46px;width:407.8px;height:1px;background:#86c2e2'></div>
<div class=a style='left:107px;top:346.19px;width:407.8px;height:1px;background:#86c2e2'></div>
<div class=a style='left:107px;top:367.92px;width:407.8px;height:1px;background:#86c2e2'></div>
<div class=a style='left:107px;top:389.65px;width:407.8px;height:1px;background:#86c2e2'></div>
<div class=a style='left:107px;top:411.38px;width:407.8px;height:1px;background:#86c2e2'></div>
<div class=a style='left:107px;top:433.11px;width:407.8px;height:1px;background:#86c2e2'></div>
<div class=a style='left:107px;top:454.84000000000003px;width:407.8px;height:1px;background:#86c2e2'></div>
<div class=a style='left:107px;top:476.57px;width:407.8px;height:1px;background:#86c2e2'></div>
<div class=a style='left:107px;top:498.3px;width:407.8px;height:1px;background:#86c2e2'></div>
<div class=a style='left:107px;top:520.03px;width:407.8px;height:1px;background:#86c2e2'></div>
<div class=a style='left:107px;top:541.76px;width:407.8px;height:1px;background:#86c2e2'></div>
<div class=a style='left:107px;top:563.49px;width:407.8px;height:1px;background:#86c2e2'></div>
<div class=a style='left:107px;top:585.22px;width:407.8px;height:1px;background:#86c2e2'></div>
<div class=a style='left:107px;top:606.95px;width:407.8px;height:1px;background:#86c2e2'></div>
<div class=a style='left:107px;top:628.6800000000001px;width:407.8px;height:1px;background:#86c2e2'></div>
<div class=a style='left:107px;top:650.4100000000001px;width:407.8px;height:1px;background:#86c2e2'></div>
<div class=a style='left:514.3px;top:281.5px;width:1px;height:369px;background:#86c2e2'></div>
<div class=a style='left:107px;top:650.4100000000001px;width:407.8px;height:1px;background:#6d9db5'></div>
<div class=a style='left:160.8px;top:286.7px;width:15.2px;height:14.8px;background:#f7f7fb'></div>
<svg width='16' height='15' style='left:160.8px;top:286.7px'><path d='M4.3 6 L11 6 L7.65 10 Z' fill='#505050'/></svg>
<div class=a style='left:264.4px;top:286.7px;width:15.2px;height:14.8px;background:#f7f7fb'></div>
<svg width='16' height='15' style='left:264.4px;top:286.7px'><path d='M4.3 6 L11 6 L7.65 10 Z' fill='#505050'/></svg>
<div class=a style='left:382.4px;top:286.7px;width:15.2px;height:14.8px;background:#f7f7fb'></div>
<svg width='16' height='15' style='left:382.4px;top:286.7px'><path d='M4.3 6 L11 6 L7.65 10 Z' fill='#505050'/></svg>
<div class=a style='left:498.6px;top:286.7px;width:15.2px;height:14.8px;background:#f7f7fb'></div>
<svg width='16' height='15' style='left:498.6px;top:286.7px'><path d='M4.3 6 L11 6 L7.65 10 Z' fill='#505050'/></svg>
<div class=a style='left:397.5px;top:302.4px;width:118.5px;height:23.8px;box-sizing:border-box;border:2px solid #1e6b41'></div>
<div class=a style='left:512.6px;top:322.8px;width:5px;height:5px;background:#1e6b41;box-shadow:0 0 0 1px #fff'></div>
<svg width='6' height='6' style='left:510.5px;top:645px'><path d='M5 0.5 L5 5 L0.5 5 Z' fill='#3a4c5c'/></svg>
<div class=a style='left:1189px;top:261px;width:20.5px;height:430px;background:#f5f6f7'></div>
<svg width='10' height='8' style='left:1195px;top:264.5px'><path d='M0.5 6.8 L4.5 1 L8.5 6.8 Z' fill='#707070'/></svg>
<div class=a style='left:1195px;top:276.4px;width:8.5px;height:356px;background:#787878;border-radius:4.5px'></div>
<svg width='10' height='8' style='left:1195px;top:681.8px'><path d='M0.5 0.8 L8.5 0.8 L4.5 6.5 Z' fill='#707070'/></svg>
<div class=a style='left:76px;top:691px;width:1133px;height:30.6px;background:#eaedf0'></div>
<div class=a style='left:184.7px;top:691px;width:61px;height:25.5px;background:#fbfcfc;border-radius:0 0 5px 5px'></div>
<div class=a style='left:193px;top:711.6px;width:44.7px;height:2px;background:#1e7a4c;border-radius:1px'></div>
<div class=a style='left:249.5px;top:698px;width:1px;height:14px;background:#c9cbcd'></div>
<div class=a style='left:774px;top:698px;width:420px;height:14px;background:#f6f7f8;border-radius:7px'></div>
<svg width='8' height='10' style='left:777.6px;top:700px'><path d='M6.8 0.8 L6.8 9.2 L0.8 5 Z' fill='#6f6f6f'/></svg>
<div class=a style='left:789.2px;top:700.9px;width:376.2px;height:8.1px;background:#767676;border-radius:4px'></div>
<svg width='8' height='10' style='left:1179.5px;top:700px'><path d='M0.8 0.8 L0.8 9.2 L6.8 5 Z' fill='#6f6f6f'/></svg>
<div class=a style='left:75px;top:721.6px;width:1134.5px;height:19.9px;background:#f7f8f9;border-radius:0 0 8px 8px;border-top:1px solid #dfe1e3;box-sizing:border-box'></div>
<div class=a style='left:916.8px;top:722.2px;width:36.6px;height:18.5px;background:#e3e5e7'></div>
<div class=a style='left:1047.6px;top:730.8px;width:93.4px;height:1px;background:#6d6d6d'></div>
<div class=a style='left:1093.9px;top:726.5px;width:5.6px;height:10.2px;background:#6a6a6a;border-radius:1px'></div>
<div class=t style='left:121.00px;top:69.12px;font-size:11.80px;color:#c2f4d2;-webkit-text-stroke:0.55px currentColor;transform:scaleX(0.9420);transform-origin:left;'>Autozapis</div>
<div class=t style='left:363.00px;top:70.57px;font-size:11.52px;color:#c2f4d2;transform:scaleX(0.9094);transform-origin:left;'>Zeszyt1  -  Excel</div>
<div class=t style='left:544.00px;top:70.50px;font-size:11.39px;color:#5d7e6b;transform:scaleX(1.0241);transform-origin:left;'>Wyszukaj</div>
<div class=t style='left:879.40px;top:70.62px;font-size:11.25px;color:#c2f4d2;transform:scaleX(0.9858);transform-origin:left;'>Mateusz Miciński | CentrumXP</div>
<div class=t style='left:96.60px;top:106.88px;font-size:12.07px;color:#3a3a3a;transform:scaleX(0.9260);transform-origin:left;'>Plik</div>
<div class=t style='left:260.40px;top:106.88px;font-size:12.07px;color:#3a3a3a;transform:scaleX(0.9824);transform-origin:left;'>Wstawianie</div>
<div class=t style='left:343.80px;top:106.88px;font-size:12.07px;color:#3a3a3a;transform:scaleX(1.0291);transform-origin:left;'>Układ strony</div>
<div class=t style='left:435.30px;top:106.88px;font-size:12.07px;color:#3a3a3a;'>Formuły</div>
<div class=t style='left:499.50px;top:106.88px;font-size:12.07px;color:#3a3a3a;transform:scaleX(0.9534);transform-origin:left;'>Dane</div>
<div class=t style='left:547.00px;top:106.88px;font-size:12.07px;color:#3a3a3a;transform:scaleX(0.9345);transform-origin:left;'>Recenzja</div>
<div class=t style='left:614.70px;top:106.88px;font-size:12.07px;color:#3a3a3a;transform:scaleX(1.0473);transform-origin:left;'>Widok</div>
<div class=t style='left:671.60px;top:106.88px;font-size:12.07px;color:#3a3a3a;'>Automatyzacja</div>
<div class=t style='left:772.50px;top:106.88px;font-size:12.07px;color:#3a3a3a;'>Pomoc</div>
<div class=t style='left:139.40px;top:106.88px;font-size:12.07px;color:#222;transform:scaleX(1.0564);transform-origin:left;'>Narzędzia główne</div>
<div class=t style='left:830.60px;top:106.88px;font-size:12.07px;color:#2a7658;transform:scaleX(1.0268);transform-origin:left;'>Projekt tabeli</div>
<div class=t style='left:991.00px;top:107.08px;font-size:12.07px;color:#2b2b2b;transform:scaleX(1.0147);transform-origin:left;'>Komentarze</div>
<div class=t style='left:1097.00px;top:107.08px;font-size:12.07px;color:#d8f8e2;transform:scaleX(1.0191);transform-origin:left;'>Udostępnianie</div>
<div class=t style='left:192.00px;top:136.07px;font-size:10.70px;color:#3b3b3b;-webkit-text-stroke:0.12px currentColor;transform:scaleX(1.0595);transform-origin:left;'>Aptos Narrow</div>
<div class=t style='left:289.40px;top:136.07px;font-size:10.70px;color:#3b3b3b;-webkit-text-stroke:0.12px currentColor;transform:scaleX(0.8654);transform-origin:left;'>11</div>
<div class=t style='left:471.80px;top:136.32px;font-size:10.70px;color:#3b3b3b;-webkit-text-stroke:0.12px currentColor;'>Księgowe</div>
<div class=t style='left:592.50px;top:137.07px;font-size:10.70px;color:#3b3b3b;-webkit-text-stroke:0.12px currentColor;transform:scaleX(1.0541);transform-origin:left;'>Formatowanie warunkowe</div>
<div class=t style='left:592.50px;top:161.72px;font-size:10.70px;color:#3b3b3b;-webkit-text-stroke:0.12px currentColor;transform:scaleX(1.0481);transform-origin:left;'>Formatuj jako tabelę</div>
<div class=t style='left:592.50px;top:186.32px;font-size:10.70px;color:#3b3b3b;-webkit-text-stroke:0.12px currentColor;transform:scaleX(1.0521);transform-origin:left;'>Style komórki</div>
<div class=t style='left:781.25px;top:137.07px;font-size:10.70px;color:#3b3b3b;-webkit-text-stroke:0.12px currentColor;transform:scaleX(1.0136);transform-origin:left;'>Wstaw</div>
<div class=t style='left:781.25px;top:161.72px;font-size:10.70px;color:#3b3b3b;-webkit-text-stroke:0.12px currentColor;transform:scaleX(0.9778);transform-origin:left;'>Usuń</div>
<div class=t style='left:781.25px;top:186.32px;font-size:10.70px;color:#3b3b3b;-webkit-text-stroke:0.12px currentColor;transform:scaleX(1.0493);transform-origin:left;'>Formatuj</div>
<div class=t style='left:100.60px;top:169.07px;font-size:10.97px;color:#3b3b3b;-webkit-text-stroke:0.12px currentColor;transform:scaleX(1.0070);transform-origin:left;'>Wklej</div>
<div class=t style='left:954.80px;top:168.32px;font-size:10.70px;color:#b4b4b4;-webkit-text-stroke:0.12px currentColor;transform:scaleX(1.0367);transform-origin:left;'>Poufność</div>
<div class=t style='left:1021.60px;top:168.32px;font-size:10.70px;color:#3b3b3b;-webkit-text-stroke:0.12px currentColor;transform:scaleX(1.0455);transform-origin:left;'>Dodatki</div>
<div class=t style='left:1080.30px;top:168.32px;font-size:10.70px;color:#3b3b3b;-webkit-text-stroke:0.12px currentColor;transform:scaleX(1.0907);transform-origin:left;'>Copilot</div>
<div class=t style='left:105.00px;top:206.21px;font-size:10.15px;color:#404040;-webkit-text-stroke:0.12px currentColor;transform:scaleX(1.0448);transform-origin:left;'>Schowek</div>
<div class=t style='left:228.75px;top:206.21px;font-size:10.15px;color:#404040;-webkit-text-stroke:0.12px currentColor;transform:scaleX(1.0187);transform-origin:left;'>Czcionka</div>
<div class=t style='left:359.00px;top:206.21px;font-size:10.15px;color:#404040;-webkit-text-stroke:0.12px currentColor;transform:scaleX(1.0858);transform-origin:left;'>Wyrównanie</div>
<div class=t style='left:489.80px;top:206.21px;font-size:10.15px;color:#404040;-webkit-text-stroke:0.12px currentColor;transform:scaleX(0.9615);transform-origin:left;'>Liczba</div>
<div class=t style='left:645.00px;top:206.21px;font-size:10.15px;color:#404040;-webkit-text-stroke:0.12px currentColor;transform:scaleX(0.9757);transform-origin:left;'>Style</div>
<div class=t style='left:782.00px;top:206.21px;font-size:10.15px;color:#404040;-webkit-text-stroke:0.12px currentColor;transform:scaleX(1.0550);transform-origin:left;'>Komórki</div>
<div class=t style='left:870.80px;top:206.21px;font-size:10.15px;color:#404040;-webkit-text-stroke:0.12px currentColor;transform:scaleX(1.0574);transform-origin:left;'>Edytowanie</div>
<div class=t style='left:955.60px;top:206.21px;font-size:10.15px;color:#404040;-webkit-text-stroke:0.12px currentColor;transform:scaleX(1.0501);transform-origin:left;'>Poufność</div>
<div class=t style='left:1021.60px;top:206.21px;font-size:10.15px;color:#404040;-webkit-text-stroke:0.12px currentColor;transform:scaleX(1.1020);transform-origin:left;'>Dodatki</div>
<div class=t style='left:90.30px;top:235.70px;font-size:11.39px;color:#303030;transform:scaleX(0.9418);transform-origin:left;'>D2</div>
<div class=t style='left:137.24px;top:262.29px;font-size:14.27px;color:#363636;-webkit-text-stroke:0.12px currentColor;'>A</div>
<div class=t style='left:223.89px;top:262.29px;font-size:14.27px;color:#363636;-webkit-text-stroke:0.12px currentColor;'>B</div>
<div class=t style='left:334.00px;top:262.29px;font-size:14.27px;color:#363636;-webkit-text-stroke:0.12px currentColor;'>C</div>
<div class=t style='left:451.25px;top:262.29px;font-size:14.27px;color:#363636;-webkit-text-stroke:0.12px currentColor;'>D</div>
<div class=t style='left:544.97px;top:262.29px;font-size:14.27px;color:#363636;-webkit-text-stroke:0.12px currentColor;'>E</div>
<div class=t style='left:615.22px;top:262.29px;font-size:14.27px;color:#363636;-webkit-text-stroke:0.12px currentColor;'>F</div>
<div class=t style='left:683.88px;top:262.29px;font-size:14.27px;color:#363636;-webkit-text-stroke:0.12px currentColor;'>G</div>
<div class=t style='left:754.13px;top:262.29px;font-size:14.27px;color:#363636;-webkit-text-stroke:0.12px currentColor;'>H</div>
<div class=t style='left:827.14px;top:262.29px;font-size:14.27px;color:#363636;-webkit-text-stroke:0.12px currentColor;'>I</div>
<div class=t style='left:895.41px;top:262.29px;font-size:14.27px;color:#363636;-webkit-text-stroke:0.12px currentColor;'>J</div>
<div class=t style='left:964.07px;top:262.29px;font-size:14.27px;color:#363636;-webkit-text-stroke:0.12px currentColor;'>K</div>
<div class=t style='left:1034.71px;top:262.29px;font-size:14.27px;color:#363636;-webkit-text-stroke:0.12px currentColor;'>L</div>
<div class=t style='left:1102.59px;top:262.29px;font-size:14.27px;color:#363636;-webkit-text-stroke:0.12px currentColor;'>M</div>
<div class=t style='left:1173.23px;top:262.29px;font-size:14.27px;color:#363636;-webkit-text-stroke:0.12px currentColor;'>N</div>
<div class=t style='left:87.79px;top:284.67px;font-size:14.40px;color:#363636;-webkit-text-stroke:0.12px currentColor;'>1</div>
<div class=t style='left:87.79px;top:306.40px;font-size:14.40px;color:#363636;-webkit-text-stroke:0.12px currentColor;'>2</div>
<div class=t style='left:87.79px;top:328.13px;font-size:14.40px;color:#363636;-webkit-text-stroke:0.12px currentColor;'>3</div>
<div class=t style='left:87.79px;top:349.86px;font-size:14.40px;color:#363636;-webkit-text-stroke:0.12px currentColor;'>4</div>
<div class=t style='left:87.79px;top:371.59px;font-size:14.40px;color:#363636;-webkit-text-stroke:0.12px currentColor;'>5</div>
<div class=t style='left:87.79px;top:393.32px;font-size:14.40px;color:#363636;-webkit-text-stroke:0.12px currentColor;'>6</div>
<div class=t style='left:87.79px;top:415.05px;font-size:14.40px;color:#363636;-webkit-text-stroke:0.12px currentColor;'>7</div>
<div class=t style='left:87.79px;top:436.78px;font-size:14.40px;color:#363636;-webkit-text-stroke:0.12px currentColor;'>8</div>
<div class=t style='left:87.79px;top:458.51px;font-size:14.40px;color:#363636;-webkit-text-stroke:0.12px currentColor;'>9</div>
<div class=t style='left:83.79px;top:480.24px;font-size:14.40px;color:#363636;-webkit-text-stroke:0.12px currentColor;'>10</div>
<div class=t style='left:84.32px;top:501.97px;font-size:14.40px;color:#363636;-webkit-text-stroke:0.12px currentColor;'>11</div>
<div class=t style='left:83.79px;top:523.70px;font-size:14.40px;color:#363636;-webkit-text-stroke:0.12px currentColor;'>12</div>
<div class=t style='left:83.79px;top:545.43px;font-size:14.40px;color:#363636;-webkit-text-stroke:0.12px currentColor;'>13</div>
<div class=t style='left:83.79px;top:567.16px;font-size:14.40px;color:#363636;-webkit-text-stroke:0.12px currentColor;'>14</div>
<div class=t style='left:83.79px;top:588.89px;font-size:14.40px;color:#363636;-webkit-text-stroke:0.12px currentColor;'>15</div>
<div class=t style='left:83.79px;top:610.62px;font-size:14.40px;color:#363636;-webkit-text-stroke:0.12px currentColor;'>16</div>
<div class=t style='left:83.79px;top:632.35px;font-size:14.40px;color:#363636;-webkit-text-stroke:0.12px currentColor;'>17</div>
<div class=t style='left:83.79px;top:654.08px;font-size:14.40px;color:#363636;-webkit-text-stroke:0.12px currentColor;'>18</div>
<div class=t style='left:83.79px;top:675.81px;font-size:14.40px;color:#363636;-webkit-text-stroke:0.12px currentColor;'>19</div>
<div class=t style='left:111.00px;top:285.88px;font-size:13.17px;color:#ffffff;font-weight:700;-webkit-text-stroke:0;transform:scaleX(1.0793);transform-origin:left;'>ID</div>
<div class=t style='left:180.90px;top:285.88px;font-size:13.17px;color:#ffffff;font-weight:700;-webkit-text-stroke:0;transform:scaleX(1.0532);transform-origin:left;'>Cena netto</div>
<div class=t style='left:284.40px;top:285.88px;font-size:13.17px;color:#ffffff;font-weight:700;-webkit-text-stroke:0;transform:scaleX(1.0115);transform-origin:left;'>Stawka VAT</div>
<div class=t style='left:402.30px;top:285.88px;font-size:13.17px;color:#ffffff;font-weight:700;-webkit-text-stroke:0;transform:scaleX(1.0524);transform-origin:left;'>Cena brutto</div>
<div class=t style='left:110.80px;top:306.25px;font-size:14.68px;color:#1c1c1c;-webkit-text-stroke:0.12px currentColor;transform:scaleX(0.9449);transform-origin:left;'>Towar 1</div>
<div class=t style='left:213.42px;top:306.25px;font-size:14.68px;color:#1c1c1c;-webkit-text-stroke:0.12px currentColor;transform:scaleX(0.9767);transform-origin:right;'>120,00 zł</div>
<div class=t style='left:374.01px;top:306.25px;font-size:14.68px;color:#1c1c1c;-webkit-text-stroke:0.12px currentColor;transform:scaleX(0.9440);transform-origin:right;'>5%</div>
<div class=t style='left:110.80px;top:327.98px;font-size:14.68px;color:#1c1c1c;-webkit-text-stroke:0.12px currentColor;transform:scaleX(0.9449);transform-origin:left;'>Towar 2</div>
<div class=t style='left:213.42px;top:327.98px;font-size:14.68px;color:#1c1c1c;-webkit-text-stroke:0.12px currentColor;transform:scaleX(0.9767);transform-origin:right;'>150,00 zł</div>
<div class=t style='left:374.01px;top:327.98px;font-size:14.68px;color:#1c1c1c;-webkit-text-stroke:0.12px currentColor;transform:scaleX(0.9440);transform-origin:right;'>8%</div>
<div class=t style='left:110.80px;top:349.71px;font-size:14.68px;color:#1c1c1c;-webkit-text-stroke:0.12px currentColor;transform:scaleX(0.9449);transform-origin:left;'>Towar 3</div>
<div class=t style='left:213.42px;top:349.71px;font-size:14.68px;color:#1c1c1c;-webkit-text-stroke:0.12px currentColor;transform:scaleX(0.9767);transform-origin:right;'>170,00 zł</div>
<div class=t style='left:365.86px;top:349.71px;font-size:14.68px;color:#1c1c1c;-webkit-text-stroke:0.12px currentColor;transform:scaleX(0.9440);transform-origin:right;'>23%</div>
<div class=t style='left:110.80px;top:371.44px;font-size:14.68px;color:#1c1c1c;-webkit-text-stroke:0.12px currentColor;transform:scaleX(0.9449);transform-origin:left;'>Towar 4</div>
<div class=t style='left:215.59px;top:371.44px;font-size:14.68px;color:#1c1c1c;-webkit-text-stroke:0.12px currentColor;transform:scaleX(0.9767);transform-origin:right;'>111,00 zł</div>
<div class=t style='left:365.86px;top:371.44px;font-size:14.68px;color:#1c1c1c;-webkit-text-stroke:0.12px currentColor;transform:scaleX(0.9440);transform-origin:right;'>23%</div>
<div class=t style='left:110.80px;top:393.17px;font-size:14.68px;color:#1c1c1c;-webkit-text-stroke:0.12px currentColor;transform:scaleX(0.9449);transform-origin:left;'>Towar 5</div>
<div class=t style='left:221.56px;top:393.17px;font-size:14.68px;color:#1c1c1c;-webkit-text-stroke:0.12px currentColor;transform:scaleX(0.9767);transform-origin:right;'>98,00 zł</div>
<div class=t style='left:365.86px;top:393.17px;font-size:14.68px;color:#1c1c1c;-webkit-text-stroke:0.12px currentColor;transform:scaleX(0.9440);transform-origin:right;'>23%</div>
<div class=t style='left:110.80px;top:414.90px;font-size:14.68px;color:#1c1c1c;-webkit-text-stroke:0.12px currentColor;transform:scaleX(0.9449);transform-origin:left;'>Towar 6</div>
<div class=t style='left:229.71px;top:414.90px;font-size:14.68px;color:#1c1c1c;-webkit-text-stroke:0.12px currentColor;transform:scaleX(0.9767);transform-origin:right;'>5,85 zł</div>
<div class=t style='left:374.01px;top:414.90px;font-size:14.68px;color:#1c1c1c;-webkit-text-stroke:0.12px currentColor;transform:scaleX(0.9440);transform-origin:right;'>5%</div>
<div class=t style='left:110.80px;top:436.63px;font-size:14.68px;color:#1c1c1c;-webkit-text-stroke:0.12px currentColor;transform:scaleX(0.9449);transform-origin:left;'>Towar 7</div>
<div class=t style='left:221.56px;top:436.63px;font-size:14.68px;color:#1c1c1c;-webkit-text-stroke:0.12px currentColor;transform:scaleX(0.9767);transform-origin:right;'>75,00 zł</div>
<div class=t style='left:374.01px;top:436.63px;font-size:14.68px;color:#1c1c1c;-webkit-text-stroke:0.12px currentColor;transform:scaleX(0.9440);transform-origin:right;'>5%</div>
<div class=t style='left:110.80px;top:458.36px;font-size:14.68px;color:#1c1c1c;-webkit-text-stroke:0.12px currentColor;transform:scaleX(0.9449);transform-origin:left;'>Towar 8</div>
<div class=t style='left:222.65px;top:458.36px;font-size:14.68px;color:#1c1c1c;-webkit-text-stroke:0.12px currentColor;transform:scaleX(0.9767);transform-origin:right;'>11,23 zł</div>
<div class=t style='left:365.86px;top:458.36px;font-size:14.68px;color:#1c1c1c;-webkit-text-stroke:0.12px currentColor;transform:scaleX(0.9440);transform-origin:right;'>23%</div>
<div class=t style='left:110.80px;top:480.09px;font-size:14.68px;color:#1c1c1c;-webkit-text-stroke:0.12px currentColor;transform:scaleX(0.9449);transform-origin:left;'>Towar 9</div>
<div class=t style='left:213.42px;top:480.09px;font-size:14.68px;color:#1c1c1c;-webkit-text-stroke:0.12px currentColor;transform:scaleX(0.9767);transform-origin:right;'>198,00 zł</div>
<div class=t style='left:374.01px;top:480.09px;font-size:14.68px;color:#1c1c1c;-webkit-text-stroke:0.12px currentColor;transform:scaleX(0.9440);transform-origin:right;'>8%</div>
<div class=t style='left:110.80px;top:501.82px;font-size:14.68px;color:#1c1c1c;-webkit-text-stroke:0.12px currentColor;transform:scaleX(0.9449);transform-origin:left;'>Towar 10</div>
<div class=t style='left:221.56px;top:501.82px;font-size:14.68px;color:#1c1c1c;-webkit-text-stroke:0.12px currentColor;transform:scaleX(0.9767);transform-origin:right;'>99,90 zł</div>
<div class=t style='left:365.86px;top:501.82px;font-size:14.68px;color:#1c1c1c;-webkit-text-stroke:0.12px currentColor;transform:scaleX(0.9440);transform-origin:right;'>23%</div>
<div class=t style='left:110.80px;top:523.55px;font-size:14.68px;color:#1c1c1c;-webkit-text-stroke:0.12px currentColor;transform:scaleX(0.9449);transform-origin:left;'>Towar 11</div>
<div class=t style='left:221.56px;top:523.55px;font-size:14.68px;color:#1c1c1c;-webkit-text-stroke:0.12px currentColor;transform:scaleX(0.9767);transform-origin:right;'>55,45 zł</div>
<div class=t style='left:365.86px;top:523.55px;font-size:14.68px;color:#1c1c1c;-webkit-text-stroke:0.12px currentColor;transform:scaleX(0.9440);transform-origin:right;'>23%</div>
<div class=t style='left:110.80px;top:545.28px;font-size:14.68px;color:#1c1c1c;-webkit-text-stroke:0.12px currentColor;transform:scaleX(0.9449);transform-origin:left;'>Towar 12</div>
<div class=t style='left:221.56px;top:545.28px;font-size:14.68px;color:#1c1c1c;-webkit-text-stroke:0.12px currentColor;transform:scaleX(0.9767);transform-origin:right;'>52,22 zł</div>
<div class=t style='left:365.86px;top:545.28px;font-size:14.68px;color:#1c1c1c;-webkit-text-stroke:0.12px currentColor;transform:scaleX(0.9440);transform-origin:right;'>23%</div>
<div class=t style='left:110.80px;top:567.01px;font-size:14.68px;color:#1c1c1c;-webkit-text-stroke:0.12px currentColor;transform:scaleX(0.9449);transform-origin:left;'>Towar 13</div>
<div class=t style='left:213.42px;top:567.01px;font-size:14.68px;color:#1c1c1c;-webkit-text-stroke:0.12px currentColor;transform:scaleX(0.9767);transform-origin:right;'>105,15 zł</div>
<div class=t style='left:374.01px;top:567.01px;font-size:14.68px;color:#1c1c1c;-webkit-text-stroke:0.12px currentColor;transform:scaleX(0.9440);transform-origin:right;'>8%</div>
<div class=t style='left:110.80px;top:588.74px;font-size:14.68px;color:#1c1c1c;-webkit-text-stroke:0.12px currentColor;transform:scaleX(0.9449);transform-origin:left;'>Towar 14</div>
<div class=t style='left:221.56px;top:588.74px;font-size:14.68px;color:#1c1c1c;-webkit-text-stroke:0.12px currentColor;transform:scaleX(0.9767);transform-origin:right;'>95,85 zł</div>
<div class=t style='left:374.01px;top:588.74px;font-size:14.68px;color:#1c1c1c;-webkit-text-stroke:0.12px currentColor;transform:scaleX(0.9440);transform-origin:right;'>0%</div>
<div class=t style='left:110.80px;top:610.47px;font-size:14.68px;color:#1c1c1c;-webkit-text-stroke:0.12px currentColor;transform:scaleX(0.9449);transform-origin:left;'>Towar 15</div>
<div class=t style='left:221.56px;top:610.47px;font-size:14.68px;color:#1c1c1c;-webkit-text-stroke:0.12px currentColor;transform:scaleX(0.9767);transform-origin:right;'>13,13 zł</div>
<div class=t style='left:374.01px;top:610.47px;font-size:14.68px;color:#1c1c1c;-webkit-text-stroke:0.12px currentColor;transform:scaleX(0.9440);transform-origin:right;'>0%</div>
<div class=t style='left:110.80px;top:632.20px;font-size:14.68px;color:#1c1c1c;-webkit-text-stroke:0.12px currentColor;transform:scaleX(0.9449);transform-origin:left;'>Towar 16</div>
<div class=t style='left:213.42px;top:632.20px;font-size:14.68px;color:#1c1c1c;-webkit-text-stroke:0.12px currentColor;transform:scaleX(0.9767);transform-origin:right;'>228,00 zł</div>
<div class=t style='left:374.01px;top:632.20px;font-size:14.68px;color:#1c1c1c;-webkit-text-stroke:0.12px currentColor;transform:scaleX(0.9440);transform-origin:right;'>5%</div>
<div class=t style='left:192.90px;top:696.23px;font-size:12.35px;color:#262626;font-weight:700;-webkit-text-stroke:0;transform:scaleX(0.9319);transform-origin:left;'>Arkusz1</div>
<div class=t style='left:87.80px;top:725.24px;font-size:10.56px;color:#424242;-webkit-text-stroke:0.12px currentColor;transform:scaleX(1.0345);transform-origin:left;'>Gotowy</div>
<div class=t style='left:175.20px;top:725.24px;font-size:10.56px;color:#424242;-webkit-text-stroke:0.12px currentColor;transform:scaleX(1.0570);transform-origin:left;'>Ułatwienia dostępu: dobrze przygotowane</div>
<div class=t style='left:1167.00px;top:725.24px;font-size:10.56px;color:#424242;-webkit-text-stroke:0.12px currentColor;transform:scaleX(0.9350);transform-origin:left;'>115%</div>
<svg width='1280' height='784' style='left:0;top:0' viewBox='0 0 1280 784'><rect x='93.6' y='69.4' width='12' height='13.8' fill='none' stroke='#c2f4d2' stroke-width='1.3'/><line x1='99.6' y1='69.4' x2='99.6' y2='83.2' stroke='#c2f4d2' stroke-width='1.2'/><line x1='93.6' y1='72.6' x2='105.6' y2='72.6' stroke='#c2f4d2' stroke-width='1.1'/><line x1='93.6' y1='76.6' x2='105.6' y2='76.6' stroke='#c2f4d2' stroke-width='1.1'/><line x1='93.6' y1='80.2' x2='105.6' y2='80.2' stroke='#c2f4d2' stroke-width='1.1'/><rect x='90.6' y='72' width='9' height='8.8' fill='#c2f4d2'/><path d='M92.9 73.9 L97.3 79 M97.3 73.9 L92.9 79' stroke='#3d6b50' stroke-width='1.3'/><path d='M227.6 69.5 H242.5 V83.3 H230 L227.6 80.9 Z' fill='none' stroke='#c2f4d2' stroke-width='1.3'/><path d='M230.6 69.5 V75.8 H239.5 V69.5' fill='none' stroke='#c2f4d2' stroke-width='1.2'/><path d='M231.3 83.3 V78.4 H238.8 V83.3' fill='none' stroke='#c2f4d2' stroke-width='1.2'/><path d='M257.5 74 Q262 69.4 266 70.2 Q269.8 71.3 268.8 75.5 Q268 78.5 260.8 83.8' fill='none' stroke='#c2f4d2' stroke-width='1.4' stroke-linecap='round'/><path d='M256.6 69 V74.8 H262' fill='none' stroke='#c2f4d2' stroke-width='1.5' stroke-linecap='round' stroke-linejoin='round'/><path d='M275.3 74.6 L277.9 77 L280.5 74.6' fill='none' stroke='#c2f4d2' stroke-width='1.3' stroke-linecap='round'/><path d='M305 74 Q299.5 68.8 295.5 70 Q291.8 71.5 293 75.5 Q294 78.5 300.8 83.5' fill='none' stroke='#4ea978' stroke-width='1.4' stroke-linecap='round'/><path d='M305.8 69 V74.8 H300.5' fill='none' stroke='#4ea978' stroke-width='1.5' stroke-linecap='round' stroke-linejoin='round'/><path d='M312.2 74.8 L314.6 77 L317 74.8' fill='none' stroke='#4ea978' stroke-width='1.3' stroke-linecap='round'/><line x1='332' y1='73.7' x2='339' y2='73.7' stroke='#c2f4d2' stroke-width='1.4'/><path d='M332.6 76.2 L335.5 78.9 L338.4 76.2' fill='none' stroke='#c2f4d2' stroke-width='1.4' stroke-linecap='round'/><circle cx='525.6' cy='74.1' r='4.4' fill='none' stroke='#4c6c5a' stroke-width='1.3'/><line x1='522.4' y1='77.4' x2='517.6' y2='82.3' stroke='#4c6c5a' stroke-width='1.4' stroke-linecap='round'/><defs><clipPath id='av'><circle cx='1051' cy='76.3' r='11'/></clipPath></defs><g clip-path='url(#av)'><rect x='1040' y='65' width='22' height='23' fill='#2a2418'/><rect x='1040' y='65' width='9' height='12' fill='#5a4a30'/><ellipse cx='1051.5' cy='73.5' rx='4.2' ry='5' fill='#c99a78'/><path d='M1041 88 L1043 80 Q1051 76 1059 80 L1062 88 Z' fill='#141a3a'/><path d='M1049.5 79 L1053 79 L1052 88 L1048.5 88 Z' fill='#d8e0f0'/></g><line x1='1090.8' y1='76' x2='1101' y2='76' stroke='#c2f4d2' stroke-width='1.3'/><rect x='1136.9' y='71.9' width='8.6' height='8.6' rx='1' fill='none' stroke='#c2f4d2' stroke-width='1.2'/><path d='M1182.2 71.8 L1191 80.6 M1191 71.8 L1182.2 80.6' stroke='#c2f4d2' stroke-width='1.2'/><path d='M977 108.6 H986.4 V114.4 H981 L978.3 117.3 V114.4 H977 Z' fill='none' stroke='#3a3a3a' stroke-width='1.1' stroke-linejoin='round'/><path d='M1086 111.3 H1082.4 V118.6 H1090.8 V114.8' fill='none' stroke='#c2f4d2' stroke-width='1.1'/><path d='M1084.6 115.3 Q1085.8 110.6 1090.6 110.4' fill='none' stroke='#c2f4d2' stroke-width='1.2'/><path d='M1088.8 108.3 L1092.4 110.6 L1089.6 113.4' fill='none' stroke='#c2f4d2' stroke-width='1.2' stroke-linejoin='round'/><path d='M1187.2 112.2 L1189.9 114.8 L1192.6 112.2' fill='none' stroke='#c2f4d2' stroke-width='1.3' stroke-linecap='round'/><path d='M104.6 140 H123 V147' fill='none' stroke='#e0ac3c' stroke-width='1.3'/><path d='M104.6 140 V161.6 H116' fill='#fff9ec' stroke='#e0ac3c' stroke-width='1.3'/><path d='M105.2 141 H122.4 V147 H116 V161 H105.2 Z' fill='#fffaf0'/><path d='M108.6 142.3 V139.6 H111.6 Q112.4 136.2 114.2 136.2 Q116 136.2 116.8 139.6 H119.4 V142.3 Z' fill='#fff' stroke='#6a6a6a' stroke-width='1.1' stroke-linejoin='round'/><rect x='116.7' y='147.6' width='11.7' height='15.4' fill='#fff' stroke='#333' stroke-width='1.2'/><path d='M111.30 188.40 L113.80 191.00 L116.30 188.40' fill='none' stroke='#505050' stroke-width='1.1' stroke-linecap='round' stroke-linejoin='round'/><path d='M145 135.6 L150 146.2 M150 135.6 L145 146.2' stroke='#555' stroke-width='1.1'/><rect x='143.1' y='146.4' width='3.4' height='3.3' rx='1' fill='none' stroke='#4b8bd3' stroke-width='1.1'/><rect x='148.6' y='146.4' width='3.4' height='3.3' rx='1' fill='none' stroke='#4b8bd3' stroke-width='1.1'/><path d='M146 172.3 H140.3 V159.9 H145.4 L146.6 161' fill='none' stroke='#555' stroke-width='1.1'/><path d='M146.4 162.4 H151.4 L154.6 165.6 V174.2 H146.4 Z' fill='#fff' stroke='#555' stroke-width='1.1' stroke-linejoin='round'/><path d='M151.2 162.4 V165.8 H154.6 M148.4 169 H152.6 M148.4 171.4 H152.6' fill='none' stroke='#555' stroke-width='0.9'/><path d='M162.10 165.70 L164.60 168.30 L167.10 165.70' fill='none' stroke='#505050' stroke-width='1.1' stroke-linecap='round' stroke-linejoin='round'/><path d='M141 192 L146.6 186.6 L151 191 L145.6 196.6 Q142.5 196.5 141 192 Z' fill='#f2b14a' stroke='#d89a30' stroke-width='0.9'/><path d='M147.8 187.6 L152.8 182.8 Q154.8 182.6 154.8 184.6 L149.9 189.6 Z' fill='#fff' stroke='#606060' stroke-width='1'/><path d='M275.50 141.20 L278.00 143.80 L280.50 141.20' fill='none' stroke='#505050' stroke-width='1.1' stroke-linecap='round' stroke-linejoin='round'/><path d='M318.10 141.20 L320.60 143.80 L323.10 141.20' fill='none' stroke='#505050' stroke-width='1.1' stroke-linecap='round' stroke-linejoin='round'/><path d='M545.10 141.20 L547.60 143.80 L550.10 141.20' fill='none' stroke='#505050' stroke-width='1.1' stroke-linecap='round' stroke-linejoin='round'/><text x='196.6' y='170.6' font-family='Liberation Sans' font-weight='700' font-size='12' fill='#424242'>B</text><text x='221.2' y='170.6' font-family='Liberation Serif' font-style='italic' font-size='12.5' fill='#424242'>I</text><text x='244.4' y='170.4' font-family='Liberation Sans' font-size='11.4' fill='#424242' textLength='8' lengthAdjust='spacingAndGlyphs'>U</text><line x1='244.4' y1='172.4' x2='252.6' y2='172.4' stroke='#424242' stroke-width='1'/><path d='M264.30 165.70 L266.80 168.30 L269.30 165.70' fill='none' stroke='#505050' stroke-width='1.1' stroke-linecap='round' stroke-linejoin='round'/><text x='283.6' y='171.8' font-family='Liberation Sans' font-size='15.5' fill='#424242' textLength='11' lengthAdjust='spacingAndGlyphs'>A</text><path d='M295.2 163 L297 160.6 L298.8 163' fill='none' stroke='#424242' stroke-width='0.9'/><text x='310' y='171.8' font-family='Liberation Sans' font-size='12.2' fill='#424242' textLength='8.6' lengthAdjust='spacingAndGlyphs'>A</text><path d='M318.6 160.6 L320.4 163 L322.2 160.6' fill='none' stroke='#424242' stroke-width='0.9'/><rect x='192.8' y='184.4' width='13.6' height='13' fill='none' stroke='#555' stroke-width='1' stroke-dasharray='1 1.1'/><path d='M199.6 184.4 V197.4 M192.8 190.9 H206.4' stroke='#555' stroke-width='1' stroke-dasharray='1 1.1'/><line x1='192.4' y1='197.6' x2='206.9' y2='197.6' stroke='#222' stroke-width='1.3'/><path d='M215.20 190.20 L217.70 192.80 L220.20 190.20' fill='none' stroke='#505050' stroke-width='1.1' stroke-linecap='round' stroke-linejoin='round'/><path d='M237 189.6 L241.2 185.2 L246.2 190.2 L242 194.4 Z' fill='#fff' stroke='#444' stroke-width='1.1' stroke-linejoin='round'/><path d='M246.3 188.6 Q248.6 190.6 248 193.2' fill='none' stroke='#2c6aa8' stroke-width='1.5' stroke-linecap='round'/><rect x='233.5' y='195.2' width='15.5' height='4.3' fill='#eded1e'/><path d='M256.50 190.20 L259.00 192.80 L261.50 190.20' fill='none' stroke='#505050' stroke-width='1.1' stroke-linecap='round' stroke-linejoin='round'/><text x='275.6' y='193.6' font-family='Liberation Sans' font-size='12.4' fill='#424242' textLength='9.6' lengthAdjust='spacingAndGlyphs'>A</text><rect x='273' y='195.2' width='15' height='4' fill='#d10f1e'/><path d='M295.30 190.20 L297.80 192.80 L300.30 190.20' fill='none' stroke='#505050' stroke-width='1.1' stroke-linecap='round' stroke-linejoin='round'/><line x1='346.20' y1='135.8' x2='359.20' y2='135.8' stroke='#555' stroke-width='1.2'/><line x1='348.20' y1='139.4' x2='357.20' y2='139.4' stroke='#555' stroke-width='1.2'/><line x1='346.20' y1='143' x2='359.20' y2='143' stroke='#555' stroke-width='1.2'/><line x1='371.00' y1='138' x2='384.00' y2='138' stroke='#555' stroke-width='1.2'/><line x1='373.00' y1='141.6' x2='382.00' y2='141.6' stroke='#555' stroke-width='1.2'/><line x1='371.00' y1='145.2' x2='384.00' y2='145.2' stroke='#555' stroke-width='1.2'/><line x1='396.60' y1='141' x2='409.60' y2='141' stroke='#555' stroke-width='1.2'/><line x1='398.60' y1='145' x2='407.60' y2='145' stroke='#555' stroke-width='1.2'/><line x1='396.60' y1='149' x2='409.60' y2='149' stroke='#555' stroke-width='1.2'/><text x='421.4' y='142.4' font-family='Liberation Sans' font-size='9.2' fill='#555'>ab</text><text x='421.4' y='149.8' font-family='Liberation Sans' font-size='9.2' fill='#555'>c</text><path d='M434 144.4 Q434 147.6 430.5 147.6 H427' fill='none' stroke='#1b8ad6' stroke-width='1.2'/><path d='M429 145.6 L427 147.6 L429 149.6' fill='none' stroke='#1b8ad6' stroke-width='1.2'/><line x1='346.20' y1='160.4' x2='359.20' y2='160.4' stroke='#555' stroke-width='1.2'/><line x1='346.20' y1='164.4' x2='354.20' y2='164.4' stroke='#555' stroke-width='1.2'/><line x1='346.20' y1='168.4' x2='359.20' y2='168.4' stroke='#555' stroke-width='1.2'/><line x1='346.20' y1='172.4' x2='354.20' y2='172.4' stroke='#555' stroke-width='1.2'/><line x1='371.00' y1='160.4' x2='384.00' y2='160.4' stroke='#555' stroke-width='1.2'/><line x1='373.50' y1='164.4' x2='381.50' y2='164.4' stroke='#555' stroke-width='1.2'/><line x1='371.00' y1='168.4' x2='384.00' y2='168.4' stroke='#555' stroke-width='1.2'/><line x1='373.50' y1='172.4' x2='381.50' y2='172.4' stroke='#555' stroke-width='1.2'/><line x1='395.60' y1='160.4' x2='408.60' y2='160.4' stroke='#555' stroke-width='1.2'/><line x1='400.60' y1='164.4' x2='408.60' y2='164.4' stroke='#555' stroke-width='1.2'/><line x1='395.60' y1='168.4' x2='408.60' y2='168.4' stroke='#555' stroke-width='1.2'/><line x1='400.60' y1='172.4' x2='408.60' y2='172.4' stroke='#555' stroke-width='1.2'/><rect x='419.6' y='159.8' width='13' height='14' fill='none' stroke='#b5b5b5' stroke-width='1'/><path d='M419.6 163.6 H432.6 M419.6 170 H432.6 M426.1 159.8 V163.6 M426.1 170 V173.8 M422 166.8 H431 M423.5 165.3 L422 166.8 L423.5 168.3 M429.5 165.3 L431 166.8 L429.5 168.3' fill='none' stroke='#b5b5b5' stroke-width='0.9'/><path d='M441.50 165.70 L444.00 168.30 L446.50 165.70' fill='none' stroke='#b8b8b8' stroke-width='1.1' stroke-linecap='round' stroke-linejoin='round'/><line x1='346.20' y1='185.4' x2='359.20' y2='185.4' stroke='#555' stroke-width='1.2'/><line x1='346.20' y1='197' x2='359.20' y2='197' stroke='#555' stroke-width='1.2'/><line x1='351.20' y1='189.3' x2='359.20' y2='189.3' stroke='#555' stroke-width='1.2'/><line x1='351.20' y1='193.1' x2='359.20' y2='193.1' stroke='#555' stroke-width='1.2'/><path d='M350 191.2 H346.4 M348 189.6 L346.4 191.2 L348 192.8' fill='none' stroke='#1b8ad6' stroke-width='1.1'/><line x1='371.00' y1='185.4' x2='384.00' y2='185.4' stroke='#555' stroke-width='1.2'/><line x1='371.00' y1='197' x2='384.00' y2='197' stroke='#555' stroke-width='1.2'/><line x1='376.00' y1='189.3' x2='384.00' y2='189.3' stroke='#555' stroke-width='1.2'/><line x1='376.00' y1='193.1' x2='384.00' y2='193.1' stroke='#555' stroke-width='1.2'/><path d='M371.2 191.2 H375 M373.4 189.6 L375 191.2 L373.4 192.8' fill='none' stroke='#1b8ad6' stroke-width='1.1'/><text x='0' y='0' font-family='Liberation Sans' font-size='9.8' fill='#404040' transform='translate(399.2 194.6) rotate(-45)'>ab</text><path d='M402.4 197.6 L411.6 188.8 M408.6 188.6 H411.8 V191.8' fill='none' stroke='#2f7f86' stroke-width='1'/><path d='M418.10 190.20 L420.60 192.80 L423.10 190.20' fill='none' stroke='#505050' stroke-width='1.1' stroke-linecap='round' stroke-linejoin='round'/><rect x='472.2' y='162.6' width='13.8' height='10.4' fill='#fff' stroke='#444' stroke-width='1.2'/><text x='474' y='170.6' font-family='Liberation Sans' font-size='7' fill='#444'>CC</text><rect x='479.6' y='166.2' width='7.4' height='8.2' rx='2.2' fill='#f6d9a0' stroke='#e0902a' stroke-width='1'/><line x1='479.8' y1='170.2' x2='486.8' y2='170.2' stroke='#e0902a' stroke-width='0.8'/><path d='M494.70 165.70 L497.20 168.30 L499.70 165.70' fill='none' stroke='#505050' stroke-width='1.1' stroke-linecap='round' stroke-linejoin='round'/><text x='510.6' y='173.6' font-family='Liberation Sans' font-size='14.5' fill='#444' textLength='14.4' lengthAdjust='spacingAndGlyphs'>%</text><text x='534.8' y='170.3' font-family='Liberation Sans' font-size='9' fill='#666' textLength='15.2' lengthAdjust='spacingAndGlyphs'>000</text><text x='478' y='190.8' font-family='Liberation Sans' font-size='8.2' fill='#555'>0</text><text x='474' y='198.2' font-family='Liberation Sans' font-size='8.2' fill='#555'>,00</text><path d='M479 187.4 H473 M475 185.4 L473 187.4 L475 189.4' fill='none' stroke='#1b8ad6' stroke-width='1.1'/><text x='498.6' y='190.8' font-family='Liberation Sans' font-size='8.2' fill='#555'>,00</text><text x='503.6' y='198.2' font-family='Liberation Sans' font-size='8.2' fill='#555'>0</text><path d='M497 195 H503.4 M501.4 193 L503.4 195 L501.4 197' fill='none' stroke='#1b8ad6' stroke-width='1.1'/><path d='M170.2 215.3 V208.8 H176.7' fill='none' stroke='#555' stroke-width='1'/><path d='M172.6 211.20000000000002 L177.79999999999998 216.4 M177.79999999999998 212.60000000000002 V216.4 H174.0' fill='none' stroke='#555' stroke-width='1'/><path d='M323.2 215.3 V208.8 H329.7' fill='none' stroke='#555' stroke-width='1'/><path d='M325.59999999999997 211.20000000000002 L330.8 216.4 M330.8 212.60000000000002 V216.4 H327.0' fill='none' stroke='#555' stroke-width='1'/><path d='M449.2 215.3 V208.8 H455.7' fill='none' stroke='#555' stroke-width='1'/><path d='M451.59999999999997 211.20000000000002 L456.8 216.4 M456.8 212.60000000000002 V216.4 H453.0' fill='none' stroke='#555' stroke-width='1'/><path d='M550 215.3 V208.8 H556.5' fill='none' stroke='#555' stroke-width='1'/><path d='M552.4 211.20000000000002 L557.6 216.4 M557.6 212.60000000000002 V216.4 H553.8' fill='none' stroke='#555' stroke-width='1'/><rect x='573.4' y='136.2' width='14.4' height='12.4' fill='none' stroke='#444' stroke-width='1.1'/><line x1='578.20' y1='136.2' x2='578.20' y2='148.6' stroke='#999' stroke-width='0.8'/><line x1='573.4' y1='140.33' x2='587.8' y2='140.33' stroke='#999' stroke-width='0.8'/><line x1='583.00' y1='136.2' x2='583.00' y2='148.6' stroke='#999' stroke-width='0.8'/><line x1='573.4' y1='144.47' x2='587.8' y2='144.47' stroke='#999' stroke-width='0.8'/><rect x='578.2' y='136.6' width='9.2' height='4' fill='#e8505c'/><rect x='573.8' y='144.6' width='13.6' height='3.6' fill='#e8505c'/><rect x='578.2' y='140.6' width='4.8' height='4' fill='#5aa0d8'/><rect x='573.4' y='161' width='14.4' height='12.4' fill='none' stroke='#444' stroke-width='1.1'/><line x1='578.20' y1='161' x2='578.20' y2='173.4' stroke='#999' stroke-width='0.8'/><line x1='573.4' y1='165.13' x2='587.8' y2='165.13' stroke='#999' stroke-width='0.8'/><line x1='583.00' y1='161' x2='583.00' y2='173.4' stroke='#999' stroke-width='0.8'/><line x1='573.4' y1='169.27' x2='587.8' y2='169.27' stroke='#999' stroke-width='0.8'/><path d='M577.6 172.8 L586.2 164.2 L588 166 L588 173.4 H577.8 Z' fill='#3d8bd6'/><rect x='573.4' y='185.8' width='14.4' height='12.4' fill='none' stroke='#444' stroke-width='1.1'/><line x1='578.20' y1='185.8' x2='578.20' y2='198.20000000000002' stroke='#999' stroke-width='0.8'/><line x1='573.4' y1='189.93' x2='587.8' y2='189.93' stroke='#999' stroke-width='0.8'/><line x1='583.00' y1='185.8' x2='583.00' y2='198.20000000000002' stroke='#999' stroke-width='0.8'/><line x1='573.4' y1='194.07' x2='587.8' y2='194.07' stroke='#999' stroke-width='0.8'/><path d='M577.6 197.6 L586.2 189 L588 190.8 L588 198.2 H577.8 Z' fill='#3d8bd6'/><path d='M727.80 142.30 L730.00 144.50 L732.20 142.30' fill='none' stroke='#505050' stroke-width='1.1' stroke-linecap='round' stroke-linejoin='round'/><path d='M697.80 166.90 L700.00 169.10 L702.20 166.90' fill='none' stroke='#505050' stroke-width='1.1' stroke-linecap='round' stroke-linejoin='round'/><path d='M663.80 191.50 L666.00 193.70 L668.20 191.50' fill='none' stroke='#505050' stroke-width='1.1' stroke-linecap='round' stroke-linejoin='round'/><rect x='762.2' y='136.4' width='14.6' height='12' fill='#fff' stroke='#3c3c3c' stroke-width='1.1'/><rect x='762.8' y='137' width='4.8' height='10.8' fill='#9fd0f0'/><rect x='767.6' y='137' width='8.6' height='10.8' fill='#4aa0de'/><line x1='767.07' y1='136.4' x2='767.07' y2='148.4' stroke='#fff' stroke-width='1'/><line x1='762.2' y1='140.40' x2='776.8000000000001' y2='140.40' stroke='#fff' stroke-width='1'/><line x1='771.93' y1='136.4' x2='771.93' y2='148.4' stroke='#fff' stroke-width='1'/><line x1='762.2' y1='144.40' x2='776.8000000000001' y2='144.40' stroke='#fff' stroke-width='1'/><path d='M766.4 139.6 L764.4 142.4 L766.4 145.2' fill='none' stroke='#2a7cc8' stroke-width='1'/><rect x='762.2' y='161' width='14.6' height='12.4' fill='#fff' stroke='#3c3c3c' stroke-width='1.1'/><rect x='762.8' y='161.6' width='8' height='11.2' fill='#8cc8ee'/><rect x='771.2' y='161.6' width='5' height='11.2' fill='#fde8dc'/><line x1='767.07' y1='161' x2='767.07' y2='173.4' stroke='#fff' stroke-width='1'/><line x1='762.2' y1='165.13' x2='776.8000000000001' y2='165.13' stroke='#fff' stroke-width='1'/><line x1='771.93' y1='161' x2='771.93' y2='173.4' stroke='#fff' stroke-width='1'/><line x1='762.2' y1='169.27' x2='776.8000000000001' y2='169.27' stroke='#fff' stroke-width='1'/><path d='M766 164.6 L769 167.2 L766 169.8' fill='none' stroke='#2a7cc8' stroke-width='1.1'/><path d='M771.2 164.2 L775.8 170.4 M775.8 164.2 L771.2 170.4' stroke='#e0602c' stroke-width='1.1'/><path d='M764 185.2 H775 M764 184 V186.4 M775 184 V186.4' stroke='#3c3c3c' stroke-width='0.9'/><rect x='762.2' y='187.4' width='14.6' height='11' fill='#fff' stroke='#3c3c3c' stroke-width='1.1'/><rect x='762.8' y='190.6' width='13.4' height='4.6' fill='#4aa0de'/><rect x='767' y='188' width='5.6' height='10' fill='#8cc8ee'/><line x1='767.07' y1='187.4' x2='767.07' y2='198.4' stroke='#fff' stroke-width='1'/><line x1='762.2' y1='191.07' x2='776.8000000000001' y2='191.07' stroke='#fff' stroke-width='1'/><line x1='771.93' y1='187.4' x2='771.93' y2='198.4' stroke='#fff' stroke-width='1'/><line x1='762.2' y1='194.73' x2='776.8000000000001' y2='194.73' stroke='#fff' stroke-width='1'/><path d='M826.10 142.10 L828.60 144.70 L831.10 142.10' fill='none' stroke='#505050' stroke-width='1.1' stroke-linecap='round' stroke-linejoin='round'/><path d='M818.30 166.70 L820.80 169.30 L823.30 166.70' fill='none' stroke='#505050' stroke-width='1.1' stroke-linecap='round' stroke-linejoin='round'/><path d='M830.30 191.50 L832.50 193.70 L834.70 191.50' fill='none' stroke='#505050' stroke-width='1.1' stroke-linecap='round' stroke-linejoin='round'/><path d='M876.6 137.4 H866 L871.6 142.6 L866 147.8 H876.6' fill='none' stroke='#444' stroke-width='1.1' stroke-linejoin='miter'/><path d='M885.90 141.70 L888.40 144.30 L890.90 141.70' fill='none' stroke='#505050' stroke-width='1.1' stroke-linecap='round' stroke-linejoin='round'/><path d='M923.50 141.70 L926.00 144.30 L928.50 141.70' fill='none' stroke='#505050' stroke-width='1.1' stroke-linecap='round' stroke-linejoin='round'/><text x='903' y='142.6' font-family='Liberation Sans' font-size='7.8' fill='#2a86d6'>A</text><text x='903' y='150.2' font-family='Liberation Sans' font-size='8' fill='#444'>Z</text><path d='M909.4 139.4 H917.6 L914.4 143.6 V148 L912.6 147 V143.6 Z' fill='none' stroke='#444' stroke-width='1' stroke-linejoin='round'/><rect x='864.4' y='160.6' width='14' height='12.6' fill='none' stroke='#444' stroke-width='1.1'/><line x1='864.4' y1='162.6' x2='878.4' y2='162.6' stroke='#444' stroke-width='1'/><rect x='865' y='163.2' width='12.8' height='9.4' fill='#d9ecf8'/><path d='M871.4 164.4 V170.6 M869 168.4 L871.4 170.8 L873.8 168.4' fill='none' stroke='#2a86d6' stroke-width='1.1'/><path d='M884.40 166.10 L886.90 168.70 L889.40 166.10' fill='none' stroke='#505050' stroke-width='1.1' stroke-linecap='round' stroke-linejoin='round'/><circle cx='913.2' cy='165' r='4.6' fill='none' stroke='#444' stroke-width='1.1'/><line x1='909.8' y1='168.6' x2='904.4' y2='173.8' stroke='#444' stroke-width='1.2' stroke-linecap='round'/><path d='M923.50 166.10 L926.00 168.70 L928.50 166.10' fill='none' stroke='#505050' stroke-width='1.1' stroke-linecap='round' stroke-linejoin='round'/><path d='M865.2 193.4 L873.6 185 Q874.6 184 875.6 185 L878 187.4 Q879 188.4 878 189.4 L869.6 197.8 Q868.6 198.8 867.6 197.8 L865.2 195.4 Q864.2 194.4 865.2 193.4 Z' fill='#fff' stroke='#b458c8' stroke-width='1.2'/><path d='M865.4 193.4 L869.4 189.4 L874.2 194.2 L870.2 198.2 Q868.8 199.4 867.6 198 L865.4 195.6 Q864.4 194.4 865.4 193.4 Z' fill='#c46ad6'/><path d='M884.40 190.50 L886.90 193.10 L889.40 190.50' fill='none' stroke='#505050' stroke-width='1.1' stroke-linecap='round' stroke-linejoin='round'/><rect x='968' y='136.2' width='18.6' height='25.2' fill='#f0f0f0' stroke='#cacaca' stroke-width='1.2'/><g transform='rotate(45 986.4 140.6)'><rect x='980.6' y='136.4' width='11.6' height='8.6' rx='2' fill='#eef2ef' stroke='#c4c4c4' stroke-width='1.2'/></g><g transform='rotate(45 977.4 150.6)'><rect x='971.2' y='147.4' width='12.4' height='6.4' rx='1' fill='#f4f4f4' stroke='#c4c4c4' stroke-width='1'/><path d='M972.6 149.6 H982.4 M972.6 151.6 H982.4' stroke='#cfcfcf' stroke-width='0.8'/></g><path d='M975.40 188.80 L977.20 190.60 L979.00 188.80' fill='none' stroke='#c0c0c0' stroke-width='1.1' stroke-linecap='round' stroke-linejoin='round'/><rect x='1028.6' y='136.4' width='25.2' height='25' fill='#fff4ee' stroke='#c8643a' stroke-width='1.3'/><rect x='1031.6' y='139.4' width='8.2' height='8.2' fill='#fff' stroke='#c8643a' stroke-width='1.2'/><rect x='1042.6' y='139.4' width='8.2' height='8.2' fill='#fff' stroke='#c8643a' stroke-width='1.2'/><rect x='1031.6' y='150.2' width='8.2' height='8.2' fill='#fff' stroke='#c8643a' stroke-width='1.2'/><rect x='1042.6' y='150.2' width='8.2' height='8.2' fill='#fff' stroke='#c8643a' stroke-width='1.2'/><path d='M1104 142.4 H1110.8 Q1113.8 142.4 1113.1 145.3 L1109.6 159 Q1108.9 161.6 1106.2 161.6 H1096.4 Q1093.5 161.6 1094.2 158.8 L1097.8 145 Q1098.5 142.4 1101.3 142.4 Z' fill='#f0faf4' stroke='#3f6e58' stroke-width='1.2'/><path d='M1092.2 136.4 H1101.4 Q1104 136.4 1103.4 139 L1099.2 153 Q1098.6 155.2 1096 155.2 H1087.4 Q1084.7 155.2 1085.3 152.6 L1089.2 138.9 Q1089.9 136.4 1092.2 136.4 Z' fill='#f3fbf6' stroke='#3f6e58' stroke-width='1.2'/><path d='M1101.4 136.6 Q1104.6 136.6 1105.6 139.4 L1106.6 142 H1101.4 Q1099.6 142.2 1099 144 L1100.6 138.6 Q1101 137.2 1101.4 136.6 Z' fill='#5fb88e'/><path d='M1087.6 155.6 H1096 Q1098.4 155.4 1099 153.4 L1097.6 158.6 Q1096.6 161.4 1094.4 161.4 Q1091.2 161.4 1089.8 159.4 Z' fill='#5fb88e'/><path d='M1183.50 206.80 L1188.00 211.20 L1192.50 206.80' fill='none' stroke='#555' stroke-width='1.2' stroke-linecap='round' stroke-linejoin='round'/><path d='M164.00 238.90 L168.50 243.50 L173.00 238.90' fill='none' stroke='#505050' stroke-width='1.3' stroke-linecap='round' stroke-linejoin='round'/><circle cx='188.6' cy='237' r='0.95' fill='#444'/><circle cx='188.6' cy='241' r='0.95' fill='#444'/><circle cx='188.6' cy='245' r='0.95' fill='#444'/><path d='M205.4 236.4 L215.4 246.4 M215.4 236.4 L205.4 246.4' stroke='#c4c4c4' stroke-width='1.1'/><path d='M225.2 242 L230.2 246.6 L240.6 236.4' fill='none' stroke='#c4c4c4' stroke-width='1.1'/><text x='249.6' y='246.6' font-family='Liberation Serif' font-style='italic' font-size='13.5' fill='#333'>fx</text><path d='M1188.10 238.10 L1192.60 242.70 L1197.10 238.10' fill='none' stroke='#505050' stroke-width='1.3' stroke-linecap='round' stroke-linejoin='round'/><path d='M108.2 701.8 L104.4 705.4 L108.2 709' fill='none' stroke='#a8a8a8' stroke-width='1.1'/><path d='M133.6 701.8 L137.4 705.4 L133.6 709' fill='none' stroke='#a8a8a8' stroke-width='1.1'/><path d='M290.4 705.2 H300.2 M295.3 700.2 V710.2' stroke='#444' stroke-width='1.1'/><circle cx='757.9' cy='701.6' r='0.95' fill='#444'/><circle cx='757.9' cy='705.6' r='0.95' fill='#444'/><circle cx='757.9' cy='709.6' r='0.95' fill='#444'/><circle cx='163' cy='726.7' r='1.5' fill='none' stroke='#444' stroke-width='1.1'/><path d='M158.2 729.6 Q157.6 726.8 160.6 727.6 M165.4 727.6 Q168.4 726.8 167.8 729.4 Q166 729.8 165.6 732.2' fill='none' stroke='#444' stroke-width='1.1' stroke-linecap='round'/><path d='M160.8 728.4 Q161.2 733 160.6 737.4' fill='none' stroke='#444' stroke-width='1.2' stroke-linecap='round'/><path d='M163.6 734.4 L166.6 737.4 L171.6 732.4' fill='none' stroke='#333' stroke-width='1.1' stroke-linecap='round'/><rect x='928.4' y='725.4' width='11.4' height='11' fill='none' stroke='#333' stroke-width='1.1'/><path d='M932.2 725.4 V736.4 M936 725.4 V736.4 M928.4 729.1 H939.8 M928.4 732.8 H939.8' stroke='#333' stroke-width='0.9'/><rect x='966.4' y='725.2' width='11.8' height='11' fill='none' stroke='#2e2e2e' stroke-width='1.2'/><path d='M968.9 725.2 V734.2 H975.7 V725.2' fill='none' stroke='#2e2e2e' stroke-width='1.1'/><path d='M970.6 728.4 H974 M970.6 730.4 H974 M970.6 732.4 H974' stroke='#2e2e2e' stroke-width='0.9'/><rect x='1003.8' y='725.2' width='12.4' height='10.9' fill='none' stroke='#2e2e2e' stroke-width='1.2'/><path d='M1007.5 725.2 V731.3 M1011.2 725.2 V731.3 H1003.8' fill='none' stroke='#2e2e2e' stroke-width='1.1'/><line x1='1035' y1='731' x2='1042' y2='731' stroke='#444' stroke-width='1.1'/><path d='M1145.8 731 H1153.6 M1149.7 727.1 V734.9' stroke='#444' stroke-width='1.1'/></svg>
</body></html>
